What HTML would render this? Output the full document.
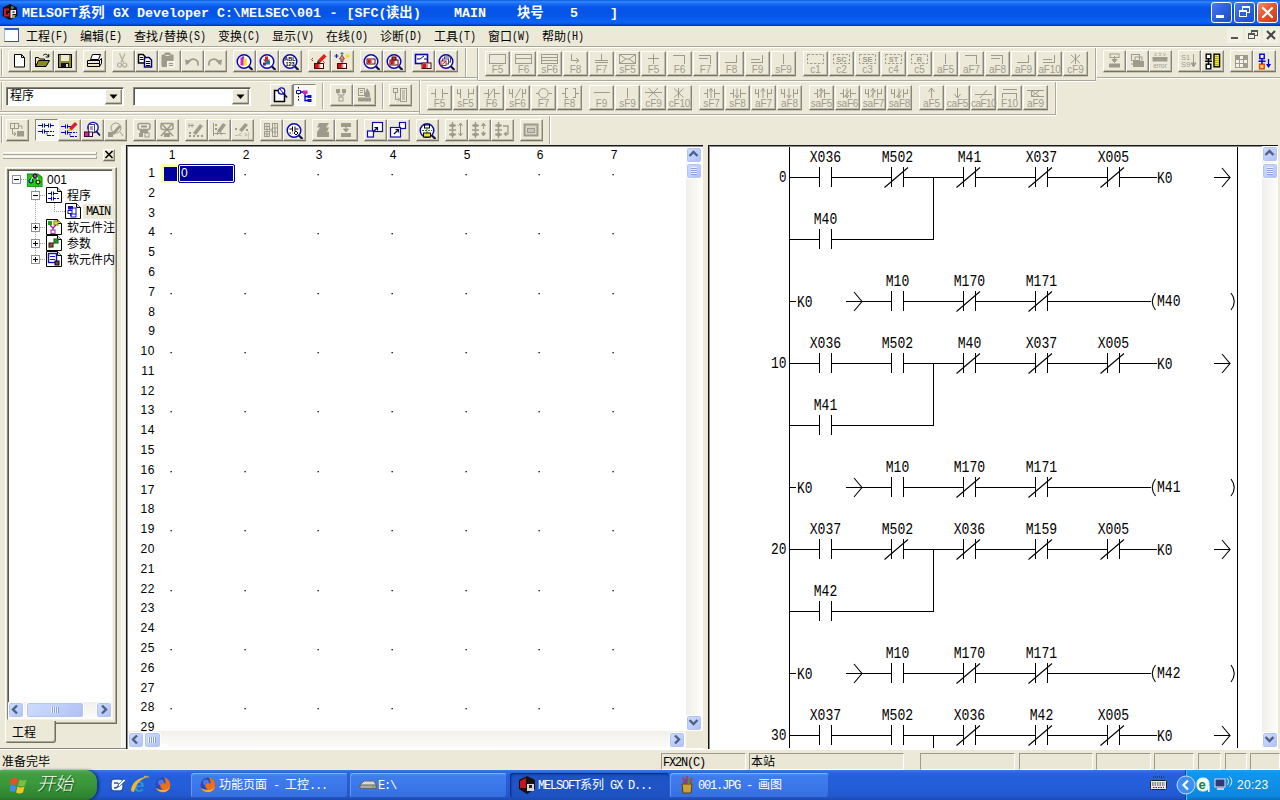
<!DOCTYPE html>
<html lang="zh-CN"><head><meta charset="utf-8"><title>MELSOFT系列 GX Developer</title>
<style>
html,body{margin:0;padding:0;}
body{width:1280px;height:800px;overflow:hidden;position:relative;background:#ECE9D8;font-family:"Liberation Sans","Noto Sans CJK SC",sans-serif;font-size:12px;color:#000;}
div{position:absolute;box-sizing:border-box;}
.t{white-space:pre;line-height:1;}
.mono{font-family:"Liberation Mono","Noto Sans CJK SC",monospace;}
.btn{background:#ECE9D8;border-top:1px solid #fff;border-left:1px solid #fff;border-right:1px solid #8a877a;border-bottom:1px solid #747166;box-shadow:inset -1px -1px 0 #bebbab, 0 1px 0 #cac7b7;}
.btnp{background:#F8F7F1;border-top:1px solid #8a877a;border-left:1px solid #8a877a;border-right:1px solid #fff;border-bottom:1px solid #fff;}
.lbl{font-family:"Liberation Sans",sans-serif;color:#9E9B8D;font-size:10px;line-height:1;white-space:pre;text-align:center;}
.sbtn{background:linear-gradient(135deg,#cfdcfd 0%,#bccdfa 60%,#aebff3 100%);border:1px solid #fff;border-radius:3px;box-shadow:inset 0 0 0 1px #b4c4f0;}
.track{background:linear-gradient(to right,#f1efe8,#fdfdfb);}
.trackh{background:linear-gradient(to bottom,#f1efe8,#fdfdfb);}
.sp{background:#EAE7D6;border:1px solid;border-color:#9d9a8c #fff #fff #9d9a8c;}
.l6{font-family:"Liberation Mono",monospace;letter-spacing:-1.2px;}
.tb{color:#fff;font-size:12px;white-space:pre;line-height:1;}
</style></head>
<body>
<div style="left:0px;top:0px;width:1280px;height:26px;background:linear-gradient(to bottom,#0A58E0 0%,#3088FC 7%,#1A6CF4 15%,#0858EA 26%,#0453E6 45%,#0658EA 65%,#0A64F6 82%,#085CEE 90%,#0046C8 95%,#0030A0 100%);"></div>
<svg style="position:absolute;left:2px;top:4px;" width="16" height="16" viewBox="0 0 16 16"><polygon points="8,0 15,3.5 15.5,12 8,16 0.5,12 1,3.5" fill="#181010"/><path d="M2 4.500h5v2h-3v4h2v-1.500h1.500v3.500h-5.500z" fill="#D01818"/><path d="M8.500 6h5.500v4h-3.500v4h-2z" fill="#e8e8e8"/><rect x="10.500" y="7.300" width="2" height="1.500" fill="#403030"/><path d="M9 2l3 1l-1 2.500l-2-1z" fill="#5a8a4a"/><path d="M10.500 11h3l-1 3h-2z" fill="#b0a040"/></svg>
<div class="t mono" style="left:22px;top:7px;color:#fff;font-weight:bold;font-size:13.33px;">MELSOFT</div>
<div class="t mono" style="left:78px;top:7px;color:#fff;font-weight:bold;font-size:13.33px;">系列</div>
<div class="t mono" style="left:113px;top:7px;color:#fff;font-weight:bold;font-size:13.33px;">GX Developer</div>
<div class="t mono" style="left:217px;top:7px;color:#fff;font-weight:bold;font-size:13.33px;">C:\MELSEC\001</div>
<div class="t mono" style="left:329.5px;top:7px;color:#fff;font-weight:bold;font-size:13.33px;">-</div>
<div class="t mono" style="left:346.5px;top:7px;color:#fff;font-weight:bold;font-size:13.33px;">[SFC(</div>
<div class="t mono" style="left:386px;top:7px;color:#fff;font-weight:bold;font-size:13.33px;">读出</div>
<div class="t mono" style="left:413px;top:7px;color:#fff;font-weight:bold;font-size:13.33px;">)</div>
<div class="t mono" style="left:454px;top:7px;color:#fff;font-weight:bold;font-size:13.33px;">MAIN</div>
<div class="t mono" style="left:517px;top:7px;color:#fff;font-weight:bold;font-size:13.33px;">块号</div>
<div class="t mono" style="left:570px;top:7px;color:#fff;font-weight:bold;font-size:13.33px;">5</div>
<div class="t mono" style="left:610px;top:7px;color:#fff;font-weight:bold;font-size:13.33px;">]</div>
<div style="left:1211px;top:2px;width:21px;height:21px;background:linear-gradient(135deg,#4A7CF0 0%,#2E62E0 45%,#1D4CC8 100%);border:1px solid #fff;border-radius:3px;"><div style="left:4px;top:12px;width:8px;height:3px;background:#fff;"></div></div>
<div style="left:1234px;top:2px;width:21px;height:21px;background:linear-gradient(135deg,#4A7CF0 0%,#2E62E0 45%,#1D4CC8 100%);border:1px solid #fff;border-radius:3px;"><div style="left:7px;top:3px;width:8px;height:7px;border:1px solid #fff;border-top:2px solid #fff;"></div><div style="left:4px;top:7px;width:8px;height:7px;border:1px solid #fff;border-top:2px solid #fff;background:#2C5FDD;"></div></div>
<div style="left:1257px;top:2px;width:21px;height:21px;background:linear-gradient(135deg,#F09070 0%,#E4582E 45%,#C83A14 100%);border:1px solid #fff;border-radius:3px;"><svg style="position:absolute;left:3px;top:3px;" width="13" height="13" viewBox="0 0 13 13"><path d="M2 2L11 11M11 2L2 11" stroke="#fff" stroke-width="2.2" stroke-linecap="round"/></svg></div>
<div style="left:4px;top:28px;width:15px;height:14px;background:#fff;border:1px solid;border-color:#2a60d0 #405080 #405080 #9ab8f0;border-top:2px solid #2a60d0;"></div>
<div class="t" style="left:26px;top:31px;font-size:12px;">工程</div>
<div class="t mono" style="left:50px;top:30px;font-size:13px;transform:scaleX(0.77);transform-origin:0 0;">(F)</div>
<div class="t" style="left:80px;top:31px;font-size:12px;">编辑</div>
<div class="t mono" style="left:104px;top:30px;font-size:13px;transform:scaleX(0.77);transform-origin:0 0;">(E)</div>
<div class="t" style="left:134px;top:31px;font-size:12px;">查找</div>
<div class="t" style="left:158px;top:31px;font-size:12px;width:6px;text-align:center;">/</div>
<div class="t" style="left:164px;top:31px;font-size:12px;">替换</div>
<div class="t mono" style="left:188px;top:30px;font-size:13px;transform:scaleX(0.77);transform-origin:0 0;">(S)</div>
<div class="t" style="left:218px;top:31px;font-size:12px;">变换</div>
<div class="t mono" style="left:242px;top:30px;font-size:13px;transform:scaleX(0.77);transform-origin:0 0;">(C)</div>
<div class="t" style="left:272px;top:31px;font-size:12px;">显示</div>
<div class="t mono" style="left:296px;top:30px;font-size:13px;transform:scaleX(0.77);transform-origin:0 0;">(V)</div>
<div class="t" style="left:326px;top:31px;font-size:12px;">在线</div>
<div class="t mono" style="left:350px;top:30px;font-size:13px;transform:scaleX(0.77);transform-origin:0 0;">(O)</div>
<div class="t" style="left:380px;top:31px;font-size:12px;">诊断</div>
<div class="t mono" style="left:404px;top:30px;font-size:13px;transform:scaleX(0.77);transform-origin:0 0;">(D)</div>
<div class="t" style="left:434px;top:31px;font-size:12px;">工具</div>
<div class="t mono" style="left:458px;top:30px;font-size:13px;transform:scaleX(0.77);transform-origin:0 0;">(T)</div>
<div class="t" style="left:488px;top:31px;font-size:12px;">窗口</div>
<div class="t mono" style="left:512px;top:30px;font-size:13px;transform:scaleX(0.77);transform-origin:0 0;">(W)</div>
<div class="t" style="left:542px;top:31px;font-size:12px;">帮助</div>
<div class="t mono" style="left:566px;top:30px;font-size:13px;transform:scaleX(0.77);transform-origin:0 0;">(H)</div>
<div style="left:1227px;top:28px;width:16px;height:15px;background:#F2F0E4;"><div style="left:4px;top:9px;width:7px;height:2px;background:#555;"></div></div>
<div style="left:1245px;top:28px;width:16px;height:15px;background:#F2F0E4;"><div style="left:6px;top:2px;width:7px;height:6px;border:1px solid #555;border-top:2px solid #555;"></div><div style="left:3px;top:5px;width:7px;height:6px;border:1px solid #555;border-top:2px solid #555;background:#F2F0E4;"></div></div>
<div style="left:1263px;top:28px;width:16px;height:15px;background:#F2F0E4;"></div>
<svg style="position:absolute;left:1263px;top:28px;" width="16" height="15" viewBox="0 0 16 15"><path d="M4 3L12 11M12 3L4 11" stroke="#444" stroke-width="2"/></svg>
<div style="left:0px;top:46px;width:1280px;height:1px;background:#ACA899;"></div>
<div style="left:0px;top:47px;width:1280px;height:1px;background:#fff;"></div>
<div style="left:0px;top:77px;width:478px;height:1px;background:#ACA899;"></div>
<div style="left:0px;top:78px;width:478px;height:1px;background:#fff;"></div>
<div style="left:0px;top:80px;width:478px;height:1px;background:#C9C6B6;"></div>
<div style="left:0px;top:81px;width:478px;height:1px;background:#F8F7F0;"></div>
<div style="left:478px;top:80px;width:618px;height:1px;background:#ACA899;"></div>
<div style="left:478px;top:81px;width:618px;height:1px;background:#fff;"></div>
<div style="left:1096px;top:77px;width:184px;height:1px;background:#ACA899;"></div>
<div style="left:1096px;top:78px;width:184px;height:1px;background:#fff;"></div>
<div style="left:0px;top:111px;width:420px;height:1px;background:#ACA899;"></div>
<div style="left:0px;top:112px;width:420px;height:1px;background:#fff;"></div>
<div style="left:0px;top:114px;width:420px;height:1px;background:#C9C6B6;"></div>
<div style="left:0px;top:115px;width:420px;height:1px;background:#F8F7F0;"></div>
<div style="left:420px;top:114px;width:636px;height:1px;background:#ACA899;"></div>
<div style="left:420px;top:115px;width:636px;height:1px;background:#fff;"></div>
<div style="left:477px;top:48px;width:1px;height:32px;background:#ACA899;"></div><div style="left:478px;top:48px;width:1px;height:32px;background:#fff;"></div>
<div style="left:1095px;top:48px;width:1px;height:32px;background:#ACA899;"></div><div style="left:1096px;top:48px;width:1px;height:32px;background:#fff;"></div>
<div style="left:465px;top:48px;width:1px;height:29px;background:#ACA899;"></div><div style="left:466px;top:48px;width:1px;height:29px;background:#fff;"></div>
<div style="left:419px;top:80px;width:1px;height:34px;background:#ACA899;"></div><div style="left:420px;top:80px;width:1px;height:34px;background:#fff;"></div>
<div style="left:1055px;top:82px;width:1px;height:32px;background:#ACA899;"></div><div style="left:1056px;top:82px;width:1px;height:32px;background:#fff;"></div>
<div style="left:549px;top:116px;width:1px;height:28px;background:#ACA899;"></div><div style="left:550px;top:116px;width:1px;height:28px;background:#fff;"></div>
<div style="left:1px;top:49px;width:1px;height:27px;background:#ACA899;"></div><div style="left:2px;top:49px;width:1px;height:27px;background:#fff;"></div>
<div style="left:1px;top:82px;width:1px;height:28px;background:#ACA899;"></div><div style="left:2px;top:82px;width:1px;height:28px;background:#fff;"></div>
<div style="left:1px;top:116px;width:1px;height:27px;background:#ACA899;"></div><div style="left:2px;top:116px;width:1px;height:27px;background:#fff;"></div>
<div class="btn" style="left:8px;top:50px;width:23px;height:22px;"><svg style="position:absolute;left:1px;top:1px;" width="18" height="18" viewBox="0 0 18 18"><path d="M4.5 2.5h7l3 3v9.5h-10z" fill="#fff" stroke="#000"/><path d="M11.5 2.5v3h3" fill="none" stroke="#000"/></svg></div>
<div class="btn" style="left:31px;top:50px;width:23px;height:22px;"><svg style="position:absolute;left:1px;top:1px;" width="18" height="18" viewBox="0 0 18 18"><path d="M2.5 14.5v-9h3l1 1.5h5v2" fill="#F0F090" stroke="#000"/><path d="M2.5 14.5l3-6h11l-3.5 6z" fill="#8B8B20" stroke="#000"/><path d="M10 3.5c2-2 4.5-1.5 5.5 1M15.8 2v3h-3" fill="none" stroke="#000"/></svg></div>
<div class="btn" style="left:54px;top:50px;width:23px;height:22px;"><svg style="position:absolute;left:1px;top:1px;" width="18" height="18" viewBox="0 0 18 18"><rect x="2.5" y="2.5" width="13" height="13" fill="#8B8B30" stroke="#000"/><rect x="5" y="3" width="8" height="6" fill="#ECE9D8"/><rect x="5" y="11" width="8" height="4.5" fill="#111"/><rect x="10" y="12" width="2" height="3" fill="#ddd"/></svg></div>
<div class="btn" style="left:83px;top:50px;width:23px;height:22px;"><svg style="position:absolute;left:1px;top:1px;" width="18" height="18" viewBox="0 0 18 18"><path d="M5.5 7.5l2-5h8l-2 5z" fill="#fff" stroke="#000"/><path d="M2.5 8.5h12l2-2v5l-2 3h-12z" fill="#e8e8e8" stroke="#000"/><path d="M2.5 11.5h12M14.5 8.5v6" stroke="#000" fill="none"/><rect x="5" y="12.5" width="7" height="1.5" fill="#F0F090"/></svg></div>
<div class="btn" style="left:112px;top:50px;width:23px;height:22px;"><svg style="position:absolute;left:1px;top:1px;" width="18" height="18" viewBox="0 0 18 18"><path d="M5.500 1.500l4 9M11 1.500l-4 9" stroke="#B0AD9E" fill="none" stroke-width="1.2"/><circle cx="5.5" cy="13" r="2" fill="none" stroke="#B0AD9E" stroke-width="1.2"/><circle cx="10.8" cy="13" r="2" fill="none" stroke="#B0AD9E" stroke-width="1.2"/></svg></div>
<div class="btn" style="left:135px;top:50px;width:23px;height:22px;"><svg style="position:absolute;left:1px;top:1px;" width="18" height="18" viewBox="0 0 18 18"><path d="M1.500 2.500h4.500l2 2v6.500h-6.500z" fill="#fff" stroke="#000" stroke-width="1.5"/><path d="M3 5.500h3M3 7.500h3.500" stroke="#000" fill="none"/><path d="M7.500 5.500h4.500l2.500 2.500v7h-7z" fill="#fff" stroke="#000068" stroke-width="1.5"/><path d="M9 9.500h4M9 11.500h4M9 13.500h4" stroke="#000" fill="none"/></svg></div>
<div class="btn" style="left:158px;top:50px;width:23px;height:22px;"><svg style="position:absolute;left:1px;top:1px;" width="18" height="18" viewBox="0 0 18 18"><rect x="1.500" y="2.500" width="12" height="12.500" rx="1" fill="#9E9B8D"/><rect x="4.500" y="0.500" width="6" height="3.500" rx="1" fill="#9E9B8D"/><rect x="5.500" y="3" width="4" height="1" fill="#ECE9D8"/><rect x="7.500" y="9.500" width="7" height="5.500" fill="#ECE9D8" stroke="#f8f8f0"/><path d="M9 11.500h4M9 13.500h4" stroke="#9E9B8D" fill="none"/></svg></div>
<div class="btn" style="left:181px;top:50px;width:23px;height:22px;"><svg style="position:absolute;left:1px;top:1px;" width="18" height="18" viewBox="0 0 18 18"><path d="M4.500 12C5 8.500 9 6.500 12 7.500C14.500 8.500 15.500 10.500 15 13.500" stroke="#9E9B8D" fill="none" stroke-width="1.7"/><path d="M2 7.500l6 1.500l-5 4.500z" fill="#9E9B8D"/></svg></div>
<div class="btn" style="left:204px;top:50px;width:23px;height:22px;"><svg style="position:absolute;left:1px;top:1px;" width="18" height="18" viewBox="0 0 18 18"><path d="M13.500 12C13 8.500 9 6.500 6 7.500C3.500 8.500 2.500 10.500 3 13.500" stroke="#9E9B8D" fill="none" stroke-width="1.7"/><path d="M16 7.500l-6 1.500l5 4.500z" fill="#9E9B8D"/></svg></div>
<div class="btn" style="left:233px;top:50px;width:23px;height:22px;"><svg style="position:absolute;left:1px;top:1px;" width="18" height="18" viewBox="0 0 18 18"><circle cx="9" cy="9.5" r="6.8" fill="#fff" stroke="#0A0AB0" stroke-width="1.5"/><g transform="translate(1 1.5)"><rect x="4.5" y="4" width="3.2" height="8" fill="#D020D0" stroke="none" stroke-width="1" /><rect x="7.7" y="5" width="3" height="7" fill="#F0E020" stroke="none" stroke-width="1" /><rect x="6" y="3" width="2" height="2" fill="#8020C0" stroke="none" stroke-width="1" /></g><path d="M14 14.5L17.5 18.0" stroke="#101040" stroke-width="2.2"/></svg></div>
<div class="btn" style="left:256px;top:50px;width:23px;height:22px;"><svg style="position:absolute;left:1px;top:1px;" width="18" height="18" viewBox="0 0 18 18"><circle cx="9" cy="9.5" r="6.8" fill="#fff" stroke="#0A0AB0" stroke-width="1.5"/><g transform="translate(1 1.5)"><path d="M6 3l3 0l0 3l2 0l-3.5 4l-3.5-4l2 0z" fill="#D02020"/><rect x="7" y="7" width="4" height="4" fill="#208080"/><rect x="4" y="9" width="3" height="3" fill="#6020A0"/></g><path d="M14 14.5L17.5 18.0" stroke="#101040" stroke-width="2.2"/></svg></div>
<div class="btn" style="left:279px;top:50px;width:23px;height:22px;"><svg style="position:absolute;left:1px;top:1px;" width="18" height="18" viewBox="0 0 18 18"><circle cx="9" cy="9.5" r="6.8" fill="#fff" stroke="#0A0AB0" stroke-width="1.5"/><g transform="translate(1 1.5)"><text x="8" y="7.6" font-family="Liberation Sans,sans-serif" font-size="5.5" fill="#000" text-anchor="middle" font-weight="bold">ABL</text><text x="8" y="12.6" font-family="Liberation Sans,sans-serif" font-size="5.5" fill="#000" text-anchor="middle" font-weight="bold">123</text></g><path d="M14 14.5L17.5 18.0" stroke="#101040" stroke-width="2.2"/></svg></div>
<div class="btn" style="left:308px;top:50px;width:23px;height:22px;"><svg style="position:absolute;left:1px;top:1px;" width="18" height="18" viewBox="0 0 18 18"><path d="M8 8l6-6l2.5 2.5l-6 6z" fill="#E02020"/><path d="M8 8l-1.5 4l4-1.5z" fill="#222"/><path d="M3 6l-1.5 1.5l1.5 1.5M13 9l1.5 1.5l-1.5 1.5" stroke="#C04000" fill="none"/><rect x="4.5" y="11.5" width="9" height="5" fill="#fff" stroke="#500" stroke-width="1" /><rect x="5.0" y="12.0" width="4.05" height="4" fill="#C81818" stroke="none" stroke-width="1" /><rect x="8.55" y="12.0" width="1.8" height="4" fill="#E08080" stroke="none" stroke-width="1" /></svg></div>
<div class="btn" style="left:331px;top:50px;width:23px;height:22px;"><svg style="position:absolute;left:1px;top:1px;" width="18" height="18" viewBox="0 0 18 18"><path d="M9 3l2.5 4h-1.5v3h-2v-3h-1.5z" fill="#E0A020" stroke="#802080" stroke-width="0.8"/><path d="M3.5 2v4M1.5 4h4" stroke="#2020C0" stroke-width="1.2"/><path d="M9 0v3M7.5 1.5h3" stroke="#208080"/><circle cx="14.5" cy="4" r="2" fill="#F0E020" stroke="none" stroke-width="1"/><rect x="4.5" y="11.5" width="9" height="5" fill="#fff" stroke="#500" stroke-width="1" /><rect x="5.0" y="12.0" width="4.05" height="4" fill="#C81818" stroke="none" stroke-width="1" /><rect x="8.55" y="12.0" width="1.8" height="4" fill="#E08080" stroke="none" stroke-width="1" /></svg></div>
<div class="btn" style="left:360px;top:50px;width:23px;height:22px;"><svg style="position:absolute;left:1px;top:1px;" width="18" height="18" viewBox="0 0 18 18"><circle cx="9" cy="9.5" r="6.8" fill="#fff" stroke="#0A0AB0" stroke-width="1.5"/><g transform="translate(1 1.5)"><rect x="4" y="5.5" width="8" height="5" fill="#fff" stroke="#500" stroke-width="1" /><rect x="4.5" y="6.0" width="3.6" height="4" fill="#C81818" stroke="none" stroke-width="1" /><rect x="7.6" y="6.0" width="1.6" height="4" fill="#E08080" stroke="none" stroke-width="1" /></g><path d="M14 14.5L17.5 18.0" stroke="#101040" stroke-width="2.2"/></svg></div>
<div class="btn" style="left:383px;top:50px;width:23px;height:22px;"><svg style="position:absolute;left:1px;top:1px;" width="18" height="18" viewBox="0 0 18 18"><circle cx="9" cy="9.5" r="6.8" fill="#fff" stroke="#0A0AB0" stroke-width="1.5"/><g transform="translate(1 1.5)"><rect x="4" y="6.5" width="8" height="5" fill="#fff" stroke="#500" stroke-width="1" /><rect x="4.5" y="7.0" width="3.6" height="4" fill="#C81818" stroke="none" stroke-width="1" /><rect x="7.6" y="7.0" width="1.6" height="4" fill="#E08080" stroke="none" stroke-width="1" /><rect x="6" y="3.5" width="4" height="3" fill="#C04040" stroke="#500" stroke-width="1" /></g><path d="M14 14.5L17.5 18.0" stroke="#101040" stroke-width="2.2"/></svg></div>
<div class="btn" style="left:412px;top:50px;width:23px;height:22px;"><svg style="position:absolute;left:1px;top:1px;" width="18" height="18" viewBox="0 0 18 18"><rect x="1.5" y="2.5" width="12" height="9" fill="#fff" stroke="#0A0AB0" stroke-width="1.6" /><path d="M3 7h3l4-3M10 7h3" stroke="#000060" fill="none"/><rect x="8" y="11" width="9" height="5.5" fill="#fff" stroke="#500" stroke-width="1" /><rect x="8.5" y="11.5" width="4.05" height="4.5" fill="#C81818" stroke="none" stroke-width="1" /><rect x="12.05" y="11.5" width="1.8" height="4.5" fill="#E08080" stroke="none" stroke-width="1" /></svg></div>
<div class="btn" style="left:435px;top:50px;width:23px;height:22px;"><svg style="position:absolute;left:1px;top:1px;" width="18" height="18" viewBox="0 0 18 18"><circle cx="9" cy="9.5" r="6.8" fill="#fff" stroke="#0A0AB0" stroke-width="1.5"/><g transform="translate(1 1.5)"><rect x="6.5" y="3.5" width="6" height="5" fill="#fff" stroke="#404080" stroke-width="1" /><rect x="4.5" y="5.5" width="6" height="5" fill="#fff" stroke="#404080" stroke-width="1" /><rect x="3" y="7.5" width="5" height="4.5" fill="#fff" stroke="#C81818" stroke-width="1" /><path d="M3.5 11.5l4-3.5" stroke="#C81818"/></g><path d="M14 14.5L17.5 18.0" stroke="#101040" stroke-width="2.2"/></svg></div>
<div class="btn" style="left:1103px;top:50px;width:23px;height:22px;"><svg style="position:absolute;left:1px;top:1px;" width="18" height="18" viewBox="0 0 18 18"><rect x="5" y="2" width="9" height="3.5" fill="none" stroke="#9E9B8D"/><path d="M9.5 4v5M7 7.5l2.5 3l2.5-3z" fill="#9E9B8D" stroke="#9E9B8D"/><rect x="4" y="11.5" width="11" height="4" fill="#9E9B8D"/></svg></div>
<div class="btn" style="left:1126px;top:50px;width:23px;height:22px;"><svg style="position:absolute;left:1px;top:1px;" width="18" height="18" viewBox="0 0 18 18"><rect x="3.5" y="2.5" width="8" height="6" fill="none" stroke="#9E9B8D"/><rect x="7" y="5" width="7" height="5" fill="none" stroke="#9E9B8D"/><rect x="5" y="9" width="11" height="6" fill="#9E9B8D"/><path d="M3 12h3" stroke="#9E9B8D"/></svg></div>
<div class="btn" style="left:1149px;top:50px;width:23px;height:22px;"><svg style="position:absolute;left:1px;top:1px;" width="18" height="18" viewBox="0 0 18 18"><rect x="1.5" y="5" width="15" height="4.5" fill="#9E9B8D"/><text x="9" y="4" font-family="Liberation Sans,sans-serif" font-size="5.5" fill="#9E9B8D" text-anchor="middle">c ± v</text><text x="9" y="15.5" font-family="Liberation Sans,sans-serif" font-size="6.5" fill="#9E9B8D" text-anchor="middle">error</text></svg></div>
<div class="btn" style="left:1178px;top:50px;width:23px;height:22px;"><svg style="position:absolute;left:1px;top:1px;" width="18" height="18" viewBox="0 0 18 18"><text x="1" y="7.5" font-family="Liberation Sans,sans-serif" font-size="7.5" fill="#9E9B8D" >S1</text><text x="1" y="15" font-family="Liberation Sans,sans-serif" font-size="7.5" fill="#9E9B8D" >S9</text><path d="M13.5 2v12M11 11l2.5 4l2.5-4z" stroke="#9E9B8D" fill="#9E9B8D"/></svg></div>
<div class="btn" style="left:1201px;top:50px;width:23px;height:22px;"><svg style="position:absolute;left:1px;top:1px;" width="18" height="18" viewBox="0 0 18 18"><rect x="3.2" y="2.2" width="4.6" height="4.6" fill="#fff" stroke="#000" stroke-width="1.4" /><rect x="3.2" y="12.2" width="4.6" height="4.6" fill="#fff" stroke="#000" stroke-width="1.4" /><path d="M5.5 6.800v5.400M2 9.300h7" stroke="#000" stroke-width="1.4"/><rect x="11" y="2.2" width="5.6" height="12.6" fill="#F4EC30" stroke="#000" stroke-width="1.4" /><path d="M12 4.500h3.600M12 6.500h3.600M12 8.500h3.600M12 10.500h3.600M12 12.500h3.600" stroke="#B0A800"/></svg></div>
<div class="btn" style="left:1230px;top:50px;width:23px;height:22px;"><svg style="position:absolute;left:1px;top:1px;" width="18" height="18" viewBox="0 0 18 18"><rect x="3" y="3" width="13" height="13" fill="#9E9B8D"/><rect x="8" y="4" width="3" height="3" fill="#f4f2ea" stroke="none" stroke-width="1" /><rect x="4" y="8" width="3" height="3" fill="#f4f2ea" stroke="none" stroke-width="1" /><rect x="8" y="8" width="3" height="3" fill="#f4f2ea" stroke="none" stroke-width="1" /><rect x="12" y="8" width="3" height="3" fill="#f4f2ea" stroke="none" stroke-width="1" /><rect x="4" y="12" width="3" height="3" fill="#f4f2ea" stroke="none" stroke-width="1" /><rect x="8" y="12" width="3" height="3" fill="#f4f2ea" stroke="none" stroke-width="1" /></svg></div>
<div class="btn" style="left:1253px;top:50px;width:23px;height:22px;"><svg style="position:absolute;left:1px;top:1px;" width="18" height="18" viewBox="0 0 18 18"><rect x="4.8" y="2.2" width="4.4" height="4.4" fill="#fff" stroke="#0000D0" stroke-width="1.4" /><rect x="4.6" y="12.2" width="4.6" height="4.6" fill="#F8D070" stroke="#E05000" stroke-width="1.5" /><path d="M7 6.800v5.200M3.500 9.300h7" stroke="#0000D0" stroke-width="1.4"/><path d="M13.500 7v8" stroke="#0000D0" stroke-width="1.3"/><path d="M11 12l2.500 4l2.500-4z" fill="#0000D0"/></svg></div>
<div class="btn" style="left:485px;top:51px;width:25px;height:25px;"><svg style="position:absolute;left:-1px;top:-1px;" width="25" height="25" viewBox="0 0 25 25"><path d="M4.5 3.5h16v9h-16z" stroke="#9E9B8D" stroke-width="1" fill="none" shape-rendering="crispEdges"/></svg><div class="lbl" style="left:-3px;top:13px;width:29px;">F5</div></div>
<div class="btn" style="left:511px;top:51px;width:25px;height:25px;"><svg style="position:absolute;left:-1px;top:-1px;" width="25" height="25" viewBox="0 0 25 25"><path d="M4.5 3.5h16v9h-16zM4.5 7.5h16" stroke="#9E9B8D" stroke-width="1" fill="none" shape-rendering="crispEdges"/></svg><div class="lbl" style="left:-3px;top:13px;width:29px;">F6</div></div>
<div class="btn" style="left:537px;top:51px;width:25px;height:25px;"><svg style="position:absolute;left:-1px;top:-1px;" width="25" height="25" viewBox="0 0 25 25"><path d="M4.5 3.5h16v9h-16zM4.5 6.5h16M4.5 9.5h16" stroke="#9E9B8D" stroke-width="1" fill="none" shape-rendering="crispEdges"/></svg><div class="lbl" style="left:-3px;top:13px;width:29px;">sF6</div></div>
<div class="btn" style="left:563px;top:51px;width:25px;height:25px;"><svg style="position:absolute;left:-1px;top:-1px;" width="25" height="25" viewBox="0 0 25 25"><path d="M8.5 3v6.5h7" stroke="#9E9B8D" stroke-width="1" fill="none" shape-rendering="crispEdges"/><path d="M13 7l3 2.500l-3 2.500" stroke="#9E9B8D" fill="none"/></svg><div class="lbl" style="left:-3px;top:13px;width:29px;">F8</div></div>
<div class="btn" style="left:589px;top:51px;width:25px;height:25px;"><svg style="position:absolute;left:-1px;top:-1px;" width="25" height="25" viewBox="0 0 25 25"><path d="M12.5 3v6M6 9.5h13M6 11.5h13" stroke="#9E9B8D" stroke-width="1" fill="none" shape-rendering="crispEdges"/></svg><div class="lbl" style="left:-3px;top:13px;width:29px;">F7</div></div>
<div class="btn" style="left:615px;top:51px;width:25px;height:25px;"><svg style="position:absolute;left:-1px;top:-1px;" width="25" height="25" viewBox="0 0 25 25"><path d="M4.5 3.5h16v9h-16z" stroke="#9E9B8D" stroke-width="1" fill="none" shape-rendering="crispEdges"/><path d="M5 4l6 4l-6 4M20 4l-6 4l6 4M11 8h3" stroke="#9E9B8D" fill="none"/></svg><div class="lbl" style="left:-3px;top:13px;width:29px;">sF5</div></div>
<div class="btn" style="left:641px;top:51px;width:25px;height:25px;"><svg style="position:absolute;left:-1px;top:-1px;" width="25" height="25" viewBox="0 0 25 25"><path d="M12.5 3v10M7 7.5h11" stroke="#9E9B8D" stroke-width="1" fill="none" shape-rendering="crispEdges"/></svg><div class="lbl" style="left:-3px;top:13px;width:29px;">F5</div></div>
<div class="btn" style="left:667px;top:51px;width:25px;height:25px;"><svg style="position:absolute;left:-1px;top:-1px;" width="25" height="25" viewBox="0 0 25 25"><path d="M6 4.5h11v8" stroke="#9E9B8D" stroke-width="1" fill="none" shape-rendering="crispEdges"/></svg><div class="lbl" style="left:-3px;top:13px;width:29px;">F6</div></div>
<div class="btn" style="left:693px;top:51px;width:25px;height:25px;"><svg style="position:absolute;left:-1px;top:-1px;" width="25" height="25" viewBox="0 0 25 25"><path d="M6 4.5h11v8M6 7.5h9" stroke="#9E9B8D" stroke-width="1" fill="none" shape-rendering="crispEdges"/></svg><div class="lbl" style="left:-3px;top:13px;width:29px;">F7</div></div>
<div class="btn" style="left:719px;top:51px;width:25px;height:25px;"><svg style="position:absolute;left:-1px;top:-1px;" width="25" height="25" viewBox="0 0 25 25"><path d="M6 11.5h11v-8" stroke="#9E9B8D" stroke-width="1" fill="none" shape-rendering="crispEdges"/></svg><div class="lbl" style="left:-3px;top:13px;width:29px;">F8</div></div>
<div class="btn" style="left:745px;top:51px;width:25px;height:25px;"><svg style="position:absolute;left:-1px;top:-1px;" width="25" height="25" viewBox="0 0 25 25"><path d="M6 11.5h11v-8M6 8.5h9" stroke="#9E9B8D" stroke-width="1" fill="none" shape-rendering="crispEdges"/></svg><div class="lbl" style="left:-3px;top:13px;width:29px;">F9</div></div>
<div class="btn" style="left:771px;top:51px;width:25px;height:25px;"><svg style="position:absolute;left:-1px;top:-1px;" width="25" height="25" viewBox="0 0 25 25"><path d="M12.5 3v10" stroke="#9E9B8D" stroke-width="1" fill="none" shape-rendering="crispEdges"/></svg><div class="lbl" style="left:-3px;top:13px;width:29px;">sF9</div></div>
<div class="btn" style="left:803px;top:51px;width:25px;height:25px;"><svg style="position:absolute;left:-1px;top:-1px;" width="25" height="25" viewBox="0 0 25 25"><rect x="4.5" y="3.5" width="16" height="9" fill="none" stroke="#9E9B8D" stroke-dasharray="2.5 1.5"/></svg><div class="lbl" style="left:-3px;top:13px;width:29px;">c1</div></div>
<div class="btn" style="left:829px;top:51px;width:25px;height:25px;"><svg style="position:absolute;left:-1px;top:-1px;" width="25" height="25" viewBox="0 0 25 25"><rect x="4.5" y="3.5" width="16" height="9" fill="none" stroke="#9E9B8D" stroke-dasharray="2.5 1.5"/><text x="12.5" y="10.8" font-family="Liberation Sans,sans-serif" font-size="7.5" fill="#9E9B8D" text-anchor="middle" font-weight="bold">SC</text></svg><div class="lbl" style="left:-3px;top:13px;width:29px;">c2</div></div>
<div class="btn" style="left:855px;top:51px;width:25px;height:25px;"><svg style="position:absolute;left:-1px;top:-1px;" width="25" height="25" viewBox="0 0 25 25"><rect x="4.5" y="3.5" width="16" height="9" fill="none" stroke="#9E9B8D" stroke-dasharray="2.5 1.5"/><text x="12.5" y="10.8" font-family="Liberation Sans,sans-serif" font-size="7.5" fill="#9E9B8D" text-anchor="middle" font-weight="bold">SE</text></svg><div class="lbl" style="left:-3px;top:13px;width:29px;">c3</div></div>
<div class="btn" style="left:881px;top:51px;width:25px;height:25px;"><svg style="position:absolute;left:-1px;top:-1px;" width="25" height="25" viewBox="0 0 25 25"><rect x="4.5" y="3.5" width="16" height="9" fill="none" stroke="#9E9B8D" stroke-dasharray="2.5 1.5"/><text x="12.5" y="10.8" font-family="Liberation Sans,sans-serif" font-size="7.5" fill="#9E9B8D" text-anchor="middle" font-weight="bold">ST</text></svg><div class="lbl" style="left:-3px;top:13px;width:29px;">c4</div></div>
<div class="btn" style="left:907px;top:51px;width:25px;height:25px;"><svg style="position:absolute;left:-1px;top:-1px;" width="25" height="25" viewBox="0 0 25 25"><rect x="4.5" y="3.5" width="16" height="9" fill="none" stroke="#9E9B8D" stroke-dasharray="2.5 1.5"/><text x="12.5" y="10.8" font-family="Liberation Sans,sans-serif" font-size="7.5" fill="#9E9B8D" text-anchor="middle" font-weight="bold">R</text></svg><div class="lbl" style="left:-3px;top:13px;width:29px;">c5</div></div>
<div class="btn" style="left:933px;top:51px;width:25px;height:25px;"><svg style="position:absolute;left:-1px;top:-1px;" width="25" height="25" viewBox="0 0 25 25"><path d="M12.5 3v10" stroke="#9E9B8D" stroke-width="1" fill="none" shape-rendering="crispEdges"/></svg><div class="lbl" style="left:-3px;top:13px;width:29px;">aF5</div></div>
<div class="btn" style="left:959px;top:51px;width:25px;height:25px;"><svg style="position:absolute;left:-1px;top:-1px;" width="25" height="25" viewBox="0 0 25 25"><path d="M6 4.5h11v8" stroke="#9E9B8D" stroke-width="1" fill="none" shape-rendering="crispEdges"/></svg><div class="lbl" style="left:-3px;top:13px;width:29px;">aF7</div></div>
<div class="btn" style="left:985px;top:51px;width:25px;height:25px;"><svg style="position:absolute;left:-1px;top:-1px;" width="25" height="25" viewBox="0 0 25 25"><path d="M6 4.5h11v8M6 7.5h9" stroke="#9E9B8D" stroke-width="1" fill="none" shape-rendering="crispEdges"/></svg><div class="lbl" style="left:-3px;top:13px;width:29px;">aF8</div></div>
<div class="btn" style="left:1011px;top:51px;width:25px;height:25px;"><svg style="position:absolute;left:-1px;top:-1px;" width="25" height="25" viewBox="0 0 25 25"><path d="M6 11.5h11v-8" stroke="#9E9B8D" stroke-width="1" fill="none" shape-rendering="crispEdges"/></svg><div class="lbl" style="left:-3px;top:13px;width:29px;">aF9</div></div>
<div class="btn" style="left:1037px;top:51px;width:25px;height:25px;"><svg style="position:absolute;left:-1px;top:-1px;" width="25" height="25" viewBox="0 0 25 25"><path d="M6 11.5h11v-8M6 8.5h9" stroke="#9E9B8D" stroke-width="1" fill="none" shape-rendering="crispEdges"/></svg><div class="lbl" style="left:-3px;top:13px;width:29px;letter-spacing:-0.2px;">aF10</div></div>
<div class="btn" style="left:1063px;top:51px;width:25px;height:25px;"><svg style="position:absolute;left:-1px;top:-1px;" width="25" height="25" viewBox="0 0 25 25"><path d="M12.5 3v10" stroke="#9E9B8D" stroke-width="1" fill="none" shape-rendering="crispEdges"/><path d="M8 4l9 8M17 4l-9 8" stroke="#9E9B8D" fill="none"/></svg><div class="lbl" style="left:-3px;top:13px;width:29px;">cF9</div></div>
<div style="left:6px;top:87px;width:118px;height:19px;background:#fff;border:1px solid;border-color:#8a877a #fff #fff #8a877a;box-shadow:inset 1px 1px 0 #5a584e;"><div class="t" style="left:3px;top:2px;font-size:12px;">程序</div><div class="btn" style="left:98px;top:1px;width:17px;height:15px;"><svg style="position:absolute;left:3px;top:4px;" width="9" height="6" viewBox="0 0 9 6"><path d="M0.5 0.5h8l-4 4.5z" fill="#000"/></svg></div></div>
<div style="left:133px;top:87px;width:118px;height:19px;background:#fff;border:1px solid;border-color:#8a877a #fff #fff #8a877a;box-shadow:inset 1px 1px 0 #5a584e;"><div class="t" style="left:3px;top:2px;font-size:12px;"></div><div class="btn" style="left:98px;top:1px;width:17px;height:15px;"><svg style="position:absolute;left:3px;top:4px;" width="9" height="6" viewBox="0 0 9 6"><path d="M0.5 0.5h8l-4 4.5z" fill="#000"/></svg></div></div>
<div class="btn" style="left:270px;top:84px;width:23px;height:22px;"><svg style="position:absolute;left:1px;top:1px;" width="18" height="18" viewBox="0 0 18 18"><path d="M2.5 4.5h7l3 3v8h-10z" fill="#fff" stroke="#000" stroke-width="1.5"/><circle cx="9.5" cy="5" r="3.2" fill="#fff" stroke="#0A0AB0" stroke-width="1.3"/><path d="M8 3l3 4" stroke="#0A0AB0"/><path d="M11.5 7.5l3.5 4" stroke="#101060" stroke-width="1.8"/></svg></div>
<div class="btnp" style="left:293px;top:84px;width:23px;height:22px;"><svg style="position:absolute;left:1px;top:1px;" width="18" height="18" viewBox="0 0 18 18"><path d="M3.5 1v15" stroke="#000" stroke-dasharray="1.5 1.5"/><path d="M1.5 4.5h4v3h-4z" fill="#fff" stroke="#0000C0"/><path d="M5.5 6h3M10 8v7.5M10 10.5h3M10 14.5h3" stroke="#0000C0" fill="none" stroke-width="1.3"/><rect x="8" y="4.5" width="4.5" height="3.5" fill="#E020C0" stroke="none" stroke-width="1" /><rect x="12.5" y="9" width="4" height="3" fill="#1010D0" stroke="none" stroke-width="1" /><rect x="12.5" y="13" width="4" height="3" fill="#1010D0" stroke="none" stroke-width="1" /></svg></div>
<div style="left:322px;top:83px;width:1px;height:26px;background:#ACA899;"></div><div style="left:323px;top:83px;width:1px;height:26px;background:#fff;"></div>
<div class="btn" style="left:330px;top:84px;width:23px;height:22px;"><svg style="position:absolute;left:1px;top:1px;" width="18" height="18" viewBox="0 0 18 18"><rect x="4" y="3" width="4" height="4" fill="#9E9B8D"/><rect x="10" y="3" width="4" height="4" fill="#9E9B8D"/><path d="M6 7v2h6v-2M9 9v2" stroke="#9E9B8D" fill="none"/><rect x="7" y="11" width="4" height="4" fill="none" stroke="#9E9B8D"/></svg></div>
<div class="btn" style="left:353px;top:84px;width:23px;height:22px;"><svg style="position:absolute;left:1px;top:1px;" width="18" height="18" viewBox="0 0 18 18"><rect x="3.5" y="2.5" width="6" height="7" fill="none" stroke="#9E9B8D"/><path d="M5 4.5h3M5 6.5h3" stroke="#9E9B8D"/><path d="M12 2l3 5h-5z" fill="#9E9B8D"/><rect x="10" y="7" width="5" height="4" fill="#9E9B8D"/><rect x="3" y="11.5" width="13" height="4" fill="#9E9B8D"/></svg></div>
<div style="left:382px;top:83px;width:1px;height:26px;background:#ACA899;"></div><div style="left:383px;top:83px;width:1px;height:26px;background:#fff;"></div>
<div class="btn" style="left:389px;top:84px;width:23px;height:22px;"><svg style="position:absolute;left:1px;top:1px;" width="18" height="18" viewBox="0 0 18 18"><rect x="2.5" y="2.5" width="4" height="4" fill="none" stroke="#9E9B8D"/><path d="M4.5 6.5v7h4M7 11.5l2 2l-2 2" stroke="#9E9B8D" fill="none"/><rect x="9.5" y="2.5" width="6" height="13" fill="none" stroke="#9E9B8D"/><path d="M11 5h3M11 7h3M11 9h3M11 11h3M11 13h3" stroke="#9E9B8D"/></svg></div>
<div class="btn" style="left:427px;top:85px;width:25px;height:25px;"><svg style="position:absolute;left:-1px;top:-1px;" width="25" height="25" viewBox="0 0 25 25"><path d="M4 8.5h4M16 8.5h4.500M8.5 3.500v9.500M15.5 3.500v9.500" stroke="#9E9B8D" stroke-width="1" fill="none" shape-rendering="crispEdges"/></svg><div class="lbl" style="left:-3px;top:13px;width:29px;">F5</div></div>
<div class="btn" style="left:453px;top:85px;width:25px;height:25px;"><svg style="position:absolute;left:-1px;top:-1px;" width="25" height="25" viewBox="0 0 25 25"><path d="M4.5 3.500v5h3M7.5 3.500v9.500M15.5 3.500v9.500M15.5 8.5h5v-5" stroke="#9E9B8D" stroke-width="1" fill="none" shape-rendering="crispEdges"/></svg><div class="lbl" style="left:-3px;top:13px;width:29px;">sF5</div></div>
<div class="btn" style="left:479px;top:85px;width:25px;height:25px;"><svg style="position:absolute;left:-1px;top:-1px;" width="25" height="25" viewBox="0 0 25 25"><path d="M5 8.5h4M16 8.5h4.500M9.5 3.500v9.500M15.5 3.500v9.500" stroke="#9E9B8D" stroke-width="1" fill="none" shape-rendering="crispEdges"/><path d="M8.500 13L15 3.500" stroke="#9E9B8D" fill="none"/></svg><div class="lbl" style="left:-3px;top:13px;width:29px;">F6</div></div>
<div class="btn" style="left:505px;top:85px;width:25px;height:25px;"><svg style="position:absolute;left:-1px;top:-1px;" width="25" height="25" viewBox="0 0 25 25"><path d="M4.5 3.500v5h3M7.5 3.500v9.500M17.5 3.500v9.500M17.5 8.5h3v-5" stroke="#9E9B8D" stroke-width="1" fill="none" shape-rendering="crispEdges"/><path d="M10 13L15.500 3.500" stroke="#9E9B8D" fill="none"/></svg><div class="lbl" style="left:-3px;top:13px;width:29px;">sF6</div></div>
<div class="btn" style="left:531px;top:85px;width:25px;height:25px;"><svg style="position:absolute;left:-1px;top:-1px;" width="25" height="25" viewBox="0 0 25 25"><path d="M4.500 8.5h3M17.500 8.5h3" stroke="#9E9B8D" stroke-width="1" fill="none" shape-rendering="crispEdges"/><circle cx="12.5" cy="8.3" r="4.7" fill="none" stroke="#9E9B8D" stroke-width="1"/></svg><div class="lbl" style="left:-3px;top:13px;width:29px;">F7</div></div>
<div class="btn" style="left:557px;top:85px;width:25px;height:25px;"><svg style="position:absolute;left:-1px;top:-1px;" width="25" height="25" viewBox="0 0 25 25"><path d="M4.500 8.5h3.500M11 3.5h-3v9h3M15.500 3.5h3v9h-3M18.500 8.5h3.500" stroke="#9E9B8D" stroke-width="1" fill="none" shape-rendering="crispEdges"/></svg><div class="lbl" style="left:-3px;top:13px;width:29px;">F8</div></div>
<div class="btn" style="left:589px;top:85px;width:25px;height:25px;"><svg style="position:absolute;left:-1px;top:-1px;" width="25" height="25" viewBox="0 0 25 25"><path d="M4.500 7.5h16.500" stroke="#9E9B8D" stroke-width="1" fill="none" shape-rendering="crispEdges"/></svg><div class="lbl" style="left:-3px;top:13px;width:29px;">F9</div></div>
<div class="btn" style="left:615px;top:85px;width:25px;height:25px;"><svg style="position:absolute;left:-1px;top:-1px;" width="25" height="25" viewBox="0 0 25 25"><path d="M12.5 3v10" stroke="#9E9B8D" stroke-width="1" fill="none" shape-rendering="crispEdges"/></svg><div class="lbl" style="left:-3px;top:13px;width:29px;">sF9</div></div>
<div class="btn" style="left:641px;top:85px;width:25px;height:25px;"><svg style="position:absolute;left:-1px;top:-1px;" width="25" height="25" viewBox="0 0 25 25"><path d="M4 7.5h17" stroke="#9E9B8D" stroke-width="1" fill="none" shape-rendering="crispEdges"/><path d="M7.500 3l9.500 9.500M17 3l-9.500 9.500" stroke="#9E9B8D" fill="none"/></svg><div class="lbl" style="left:-3px;top:13px;width:29px;">cF9</div></div>
<div class="btn" style="left:667px;top:85px;width:25px;height:25px;"><svg style="position:absolute;left:-1px;top:-1px;" width="25" height="25" viewBox="0 0 25 25"><path d="M11.5 3v10" stroke="#9E9B8D" stroke-width="1" fill="none" shape-rendering="crispEdges"/><path d="M7 3.500l9.500 9M16.500 3.500l-9.500 9" stroke="#9E9B8D" fill="none"/></svg><div class="lbl" style="left:-3px;top:13px;width:29px;letter-spacing:-0.2px;">cF10</div></div>
<div class="btn" style="left:699px;top:85px;width:25px;height:25px;"><svg style="position:absolute;left:-1px;top:-1px;" width="25" height="25" viewBox="0 0 25 25"><path d="M4.500 8.5h4M15.500 8.5h5.500M8.5 3.500v9.500M15.5 3.500v9.500" stroke="#9E9B8D" stroke-width="1" fill="none" shape-rendering="crispEdges"/><path d="M12 13V3.500M10 6.500l2-3l2 3" stroke="#9E9B8D" fill="none"/></svg><div class="lbl" style="left:-3px;top:13px;width:29px;">sF7</div></div>
<div class="btn" style="left:725px;top:85px;width:25px;height:25px;"><svg style="position:absolute;left:-1px;top:-1px;" width="25" height="25" viewBox="0 0 25 25"><path d="M4.500 8.5h4M15.500 8.5h5.500M8.5 3.500v9.500M15.5 3.500v9.500" stroke="#9E9B8D" stroke-width="1" fill="none" shape-rendering="crispEdges"/><path d="M12 3.500V13M10 10l2 3l2-3" stroke="#9E9B8D" fill="none"/></svg><div class="lbl" style="left:-3px;top:13px;width:29px;">sF8</div></div>
<div class="btn" style="left:751px;top:85px;width:25px;height:25px;"><svg style="position:absolute;left:-1px;top:-1px;" width="25" height="25" viewBox="0 0 25 25"><path d="M4.5 3.500v5h3M7.5 3.500v9.500M16.5 3.500v9.500M16.5 8.5h4v-5" stroke="#9E9B8D" stroke-width="1" fill="none" shape-rendering="crispEdges"/><path d="M12 13V3.500M10 6.500l2-3l2 3" stroke="#9E9B8D" fill="none"/></svg><div class="lbl" style="left:-3px;top:13px;width:29px;">aF7</div></div>
<div class="btn" style="left:777px;top:85px;width:25px;height:25px;"><svg style="position:absolute;left:-1px;top:-1px;" width="25" height="25" viewBox="0 0 25 25"><path d="M4.5 3.500v5h3M7.5 3.500v9.500M16.5 3.500v9.500M16.5 8.5h4v-5" stroke="#9E9B8D" stroke-width="1" fill="none" shape-rendering="crispEdges"/><path d="M12 3.500V13M10 10l2 3l2-3" stroke="#9E9B8D" fill="none"/></svg><div class="lbl" style="left:-3px;top:13px;width:29px;">aF8</div></div>
<div class="btn" style="left:809px;top:85px;width:25px;height:25px;"><svg style="position:absolute;left:-1px;top:-1px;" width="25" height="25" viewBox="0 0 25 25"><path d="M4.500 8.5h4M15.500 8.5h5.500M8.5 3.500v9.500M15.5 3.500v9.500" stroke="#9E9B8D" stroke-width="1" fill="none" shape-rendering="crispEdges"/><path d="M12 13V3.500M10 6.500l2-3l2 3" stroke="#9E9B8D" fill="none"/><path d="M9.500 12L14.500 5.500" stroke="#9E9B8D" fill="none"/></svg><div class="lbl" style="left:-3px;top:13px;width:29px;letter-spacing:-0.2px;">saF5</div></div>
<div class="btn" style="left:835px;top:85px;width:25px;height:25px;"><svg style="position:absolute;left:-1px;top:-1px;" width="25" height="25" viewBox="0 0 25 25"><path d="M4.500 8.5h4M15.500 8.5h5.500M8.5 3.500v9.500M15.5 3.500v9.500" stroke="#9E9B8D" stroke-width="1" fill="none" shape-rendering="crispEdges"/><path d="M12 3.500V13M10 10l2 3l2-3" stroke="#9E9B8D" fill="none"/><path d="M9.500 12L14.500 5.500" stroke="#9E9B8D" fill="none"/></svg><div class="lbl" style="left:-3px;top:13px;width:29px;letter-spacing:-0.2px;">saF6</div></div>
<div class="btn" style="left:861px;top:85px;width:25px;height:25px;"><svg style="position:absolute;left:-1px;top:-1px;" width="25" height="25" viewBox="0 0 25 25"><path d="M4.5 3.500v5h3M7.5 3.500v9.500M16.5 3.500v9.500M16.5 8.5h4v-5" stroke="#9E9B8D" stroke-width="1" fill="none" shape-rendering="crispEdges"/><path d="M12 13V3.500M10 6.500l2-3l2 3" stroke="#9E9B8D" fill="none"/><path d="M9.500 12L14.500 5.500" stroke="#9E9B8D" fill="none"/></svg><div class="lbl" style="left:-3px;top:13px;width:29px;letter-spacing:-0.2px;">saF7</div></div>
<div class="btn" style="left:887px;top:85px;width:25px;height:25px;"><svg style="position:absolute;left:-1px;top:-1px;" width="25" height="25" viewBox="0 0 25 25"><path d="M4.5 3.500v5h3M7.5 3.500v9.500M16.5 3.500v9.500M16.5 8.5h4v-5" stroke="#9E9B8D" stroke-width="1" fill="none" shape-rendering="crispEdges"/><path d="M12 3.500V13M10 10l2 3l2-3" stroke="#9E9B8D" fill="none"/><path d="M9.500 12L14.500 5.500" stroke="#9E9B8D" fill="none"/></svg><div class="lbl" style="left:-3px;top:13px;width:29px;letter-spacing:-0.2px;">saF8</div></div>
<div class="btn" style="left:919px;top:85px;width:25px;height:25px;"><svg style="position:absolute;left:-1px;top:-1px;" width="25" height="25" viewBox="0 0 25 25"><path d="M12.500 13V3M9.500 7l3-4l3 4" stroke="#9E9B8D" fill="none"/></svg><div class="lbl" style="left:-3px;top:13px;width:29px;">aF5</div></div>
<div class="btn" style="left:945px;top:85px;width:25px;height:25px;"><svg style="position:absolute;left:-1px;top:-1px;" width="25" height="25" viewBox="0 0 25 25"><path d="M12.500 3V13M9.500 9l3 4l3-4" stroke="#9E9B8D" fill="none"/></svg><div class="lbl" style="left:-3px;top:13px;width:29px;letter-spacing:-0.2px;">caF5</div></div>
<div class="btn" style="left:971px;top:85px;width:25px;height:25px;"><svg style="position:absolute;left:-1px;top:-1px;" width="25" height="25" viewBox="0 0 25 25"><path d="M4 9.5h17" stroke="#9E9B8D" stroke-width="1" fill="none" shape-rendering="crispEdges"/><path d="M9 13L16 5" stroke="#9E9B8D" fill="none"/></svg><div class="lbl" style="left:-3px;top:13px;width:29px;letter-spacing:-0.6px;">caF10</div></div>
<div class="btn" style="left:997px;top:85px;width:25px;height:25px;"><svg style="position:absolute;left:-1px;top:-1px;" width="25" height="25" viewBox="0 0 25 25"><path d="M5.5 13v-5h14v5.500M5.5 4.5h14" stroke="#9E9B8D" stroke-width="1" fill="none" shape-rendering="crispEdges"/></svg><div class="lbl" style="left:-3px;top:13px;width:29px;">F10</div></div>
<div class="btn" style="left:1023px;top:85px;width:25px;height:25px;"><svg style="position:absolute;left:-1px;top:-1px;" width="25" height="25" viewBox="0 0 25 25"><path d="M4 5.5h17M8.5 5.5v6M8.5 11.5h12" stroke="#9E9B8D" stroke-width="1" fill="none" shape-rendering="crispEdges"/><path d="M9 6l7 5M16 6l-7 5" stroke="#9E9B8D" fill="none"/></svg><div class="lbl" style="left:-3px;top:13px;width:29px;">aF9</div></div>
<div class="btn" style="left:6px;top:119px;width:23px;height:22px;"><svg style="position:absolute;left:1px;top:1px;" width="18" height="18" viewBox="0 0 18 18"><rect x="2.5" y="2.5" width="8" height="5" fill="none" stroke="#9E9B8D"/><path d="M6.5 2.5v5M11 5h3v3M4.5 8v5h3M6 11l2 2l-2 2" stroke="#9E9B8D" fill="none"/><rect x="9" y="10" width="7" height="5.5" fill="#9E9B8D"/></svg></div>
<div class="btnp" style="left:35px;top:119px;width:23px;height:22px;"><svg style="position:absolute;left:1px;top:1px;" width="18" height="18" viewBox="0 0 18 18"><path d="M1 4.5h4M7 4.5h4M13 4.5h4M5.5 2.5v4M7.5 2.5v4M11.5 2.5v4M13.5 2.5v4M1 10.5h4M5.5 8.5v4M7.5 8.5v4" stroke="#0000C0" fill="none"/><path d="M8 10.5h2v4h2M10 10.5h7M12 14.5h5" stroke="#0000C0" fill="none" stroke-dasharray="2 1"/></svg></div>
<div class="btn" style="left:58px;top:119px;width:23px;height:22px;"><svg style="position:absolute;left:1px;top:1px;" width="18" height="18" viewBox="0 0 18 18"><path d="M1 5.5h4M7 5.5h4M5.5 3.5v4M7.5 3.5v4M1 11.5h4M5.5 9.5v4M7.5 9.5v4" stroke="#0000C0" fill="none"/><path d="M8 11.5h2v4h2M10 11.5h7M12 15.5h5" stroke="#0000C0" fill="none" stroke-dasharray="2 1"/><path d="M9 7l6-6l2.5 2.5l-6 6z" fill="#E02020"/><path d="M9 7l-1 3.5l3.5-1z" fill="#E0C020"/></svg></div>
<div class="btn" style="left:81px;top:119px;width:23px;height:22px;"><svg style="position:absolute;left:1px;top:1px;" width="18" height="18" viewBox="0 0 18 18"><circle cx="10" cy="6.5" r="5.2" fill="#fff" stroke="#0A0AB0" stroke-width="1.3"/><path d="M13.5 10.5l3.5 4" stroke="#101060" stroke-width="1.8"/><rect x="5.5" y="3.5" width="6" height="8" fill="#fff" stroke="#404080" stroke-width="1" /><path d="M7 6h3M7 8h3" stroke="#404080"/><rect x="1.5" y="11" width="4.5" height="4.5" fill="#E020A0" stroke="#400040" stroke-width="1" /><rect x="6" y="11" width="3.5" height="4.5" fill="#fff" stroke="#400040" stroke-width="1" /></svg></div>
<div class="btn" style="left:104px;top:119px;width:23px;height:22px;"><svg style="position:absolute;left:1px;top:1px;" width="18" height="18" viewBox="0 0 18 18"><circle cx="10" cy="7" r="5" fill="none" stroke="#9E9B8D"/><path d="M6 12l7-8l2 2l-7 8z" fill="#9E9B8D"/><rect x="2" y="11" width="5" height="5" fill="#9E9B8D"/><path d="M14 11l3 4" stroke="#9E9B8D"/></svg></div>
<div class="btn" style="left:133px;top:119px;width:23px;height:22px;"><svg style="position:absolute;left:1px;top:1px;" width="18" height="18" viewBox="0 0 18 18"><rect x="3" y="2.5" width="12" height="6" rx="2" fill="none" stroke="#9E9B8D" stroke-width="1.5"/><rect x="6" y="4.5" width="6" height="2" fill="#9E9B8D"/><rect x="5" y="9" width="8" height="3" fill="#9E9B8D"/><rect x="4" y="12" width="4" height="4" fill="#9E9B8D"/><rect x="10" y="12" width="4" height="4" fill="none" stroke="#9E9B8D"/></svg></div>
<div class="btn" style="left:156px;top:119px;width:23px;height:22px;"><svg style="position:absolute;left:1px;top:1px;" width="18" height="18" viewBox="0 0 18 18"><rect x="3" y="2.5" width="12" height="6" rx="2" fill="none" stroke="#9E9B8D" stroke-width="1.5"/><path d="M3 2l12 13M15 2l-12 13" stroke="#9E9B8D" stroke-width="1.6"/><rect x="6" y="12" width="6" height="4" fill="#9E9B8D"/></svg></div>
<div class="btn" style="left:185px;top:119px;width:23px;height:22px;"><svg style="position:absolute;left:1px;top:1px;" width="18" height="18" viewBox="0 0 18 18"><path d="M2 4.5h5M2 2.5v4M5 2.5v4" stroke="#9E9B8D" fill="none"/><path d="M6 12l7-9l3 2l-7 9z" fill="#9E9B8D"/><path d="M2 11l2 2M4 11l-2 2M6 14l2 2M8 14l-2 2M10 14l2 2M12 14l-2 2M14 14l2 2M16 14l-2 2M2 14l2 2M4 14l-2 2" stroke="#9E9B8D"/></svg></div>
<div class="btn" style="left:208px;top:119px;width:23px;height:22px;"><svg style="position:absolute;left:1px;top:1px;" width="18" height="18" viewBox="0 0 18 18"><path d="M3.5 2v13M3.5 12.5h12M7.5 11v3M11 11v3" stroke="#9E9B8D" fill="none"/><path d="M7 10l6-8l3 2l-6 8z" fill="#9E9B8D"/><path d="M5 3l2 2M7 3l-2 2M5 7l2 2M7 7l-2 2" stroke="#9E9B8D"/></svg></div>
<div class="btn" style="left:231px;top:119px;width:23px;height:22px;"><svg style="position:absolute;left:1px;top:1px;" width="18" height="18" viewBox="0 0 18 18"><path d="M6 9l6-7l3 2l-6 7z" fill="#9E9B8D"/><path d="M2 7l2 2M4 7l-2 2M13 8l2 2M15 8l-2 2" stroke="#9E9B8D"/><text x="9" y="16" font-family="Liberation Sans,sans-serif" font-size="6.5" fill="#9E9B8D" text-anchor="middle">–&lt; &gt;|</text></svg></div>
<div class="btn" style="left:260px;top:119px;width:23px;height:22px;"><svg style="position:absolute;left:1px;top:1px;" width="18" height="18" viewBox="0 0 18 18"><rect x="2.5" y="2.5" width="5" height="6" fill="none" stroke="#9E9B8D"/><rect x="2.5" y="10.5" width="5" height="5" fill="none" stroke="#9E9B8D"/><path d="M5 2.5v13M2.5 5.5h5M2.5 13h5" stroke="#9E9B8D"/><rect x="10.5" y="2.5" width="5" height="13" fill="none" stroke="#9E9B8D"/><path d="M13 2.5v13M10.5 7h5M10.5 11h5M7.5 9h3M9 7.5l1.5 1.5l-1.5 1.5" stroke="#9E9B8D" fill="none"/></svg></div>
<div class="btn" style="left:283px;top:119px;width:23px;height:22px;"><svg style="position:absolute;left:1px;top:1px;" width="18" height="18" viewBox="0 0 18 18"><circle cx="9" cy="9.5" r="6.8" fill="#fff" stroke="#0A0AB0" stroke-width="1.5"/><g transform="translate(1 1.5)"><path d="M3.5 6.5h2.5M9.5 6.5h3M6.5 4v5M9 4v5" stroke="#000" fill="none"/><path d="M3.5 10.5h3" stroke="#000" stroke-dasharray="1.5 1"/><path d="M8 10.5l2-2l2 2l-2 2z" stroke="#000" fill="none"/></g><path d="M14 14.5L17.5 18.0" stroke="#101040" stroke-width="2.2"/></svg></div>
<div class="btn" style="left:312px;top:119px;width:23px;height:22px;"><svg style="position:absolute;left:1px;top:1px;" width="18" height="18" viewBox="0 0 18 18"><path d="M5 2h10l-3 4.5l3 0l-2 4.5h2v5h-12v-5l3-4.5h-3z" fill="#9E9B8D"/></svg></div>
<div class="btn" style="left:335px;top:119px;width:23px;height:22px;"><svg style="position:absolute;left:1px;top:1px;" width="18" height="18" viewBox="0 0 18 18"><rect x="4" y="2" width="10" height="4" fill="#9E9B8D"/><path d="M9 6v4M6.5 8l2.5 3l2.5-3z" fill="#9E9B8D" stroke="#9E9B8D"/><rect x="4" y="12" width="10" height="4" fill="#9E9B8D"/></svg></div>
<div class="btn" style="left:364px;top:119px;width:23px;height:22px;"><svg style="position:absolute;left:1px;top:1px;" width="18" height="18" viewBox="0 0 18 18"><rect x="6.5" y="1.5" width="10" height="9" fill="#fff" stroke="#0A0AB0" stroke-width="1.2" /><rect x="1.5" y="10" width="6" height="6" fill="#fff" stroke="#0A0AB0" stroke-width="1.2" /><path d="M7 11l4-4M8.5 6.5h3v3" stroke="#000060" fill="none" stroke-width="1.2"/></svg></div>
<div class="btn" style="left:387px;top:119px;width:23px;height:22px;"><svg style="position:absolute;left:1px;top:1px;" width="18" height="18" viewBox="0 0 18 18"><rect x="10.5" y="1.5" width="6" height="6" fill="#fff" stroke="#0A0AB0" stroke-width="1.2" /><rect x="1.5" y="6.5" width="10" height="9.5" fill="#fff" stroke="#0A0AB0" stroke-width="1.2" /><path d="M5 13l4-4M6.5 8.5h3v3" stroke="#000060" fill="none" stroke-width="1.2"/></svg></div>
<div class="btn" style="left:416px;top:119px;width:23px;height:22px;"><svg style="position:absolute;left:1px;top:1px;" width="18" height="18" viewBox="0 0 18 18"><circle cx="9" cy="9.5" r="6.8" fill="#fff" stroke="#0A0AB0" stroke-width="1.5"/><g transform="translate(1 1.5)"><rect x="5.5" y="2.5" width="5" height="3" fill="#fff" stroke="#000" stroke-width="1" /><path d="M3 8h10M8 5.5v6" stroke="#208020" stroke-dasharray="2 1"/><rect x="4.5" y="10.5" width="7" height="4" fill="#F0E020" stroke="#000" stroke-width="1" /></g><path d="M14 14.5L17.5 18.0" stroke="#101040" stroke-width="2.2"/></svg></div>
<div class="btn" style="left:445px;top:119px;width:23px;height:22px;"><svg style="position:absolute;left:1px;top:1px;" width="18" height="18" viewBox="0 0 18 18"><path d="M5.5 1v16M2 4.5h7M2 9h7M2 13.5h7" stroke="#9E9B8D" stroke-width="1.5"/><rect x="3.5" y="3" width="4" height="3" fill="#9E9B8D"/><rect x="3.5" y="12" width="4" height="3" fill="#9E9B8D"/><path d="M13.5 2v13M11.5 5l2-3l2 3M11.5 12l2 3l2-3" stroke="#9E9B8D" fill="none"/></svg></div>
<div class="btn" style="left:468px;top:119px;width:23px;height:22px;"><svg style="position:absolute;left:1px;top:1px;" width="18" height="18" viewBox="0 0 18 18"><path d="M5.5 1v16M2 4.5h7M2 9h7M2 13.5h7" stroke="#9E9B8D" stroke-width="1.5"/><rect x="3.5" y="3" width="4" height="3" fill="#9E9B8D"/><rect x="3.5" y="12" width="4" height="3" fill="#9E9B8D"/><path d="M13.5 2v6M11.5 5l2-3l2 3M13.5 10v5M11.5 12l2 3l2-3z" stroke="#9E9B8D" fill="#9E9B8D"/></svg></div>
<div class="btn" style="left:491px;top:119px;width:23px;height:22px;"><svg style="position:absolute;left:1px;top:1px;" width="18" height="18" viewBox="0 0 18 18"><path d="M5.5 1v16M2 4.5h7M2 9h7M2 13.5h7" stroke="#9E9B8D" stroke-width="1.5"/><rect x="3.5" y="3" width="4" height="3" fill="#9E9B8D"/><rect x="3.5" y="12" width="4" height="3" fill="#9E9B8D"/><path d="M10 5h5v8h-3M13.5 11l-2 2l2 2" stroke="#9E9B8D" fill="none" stroke-width="1.3"/></svg></div>
<div class="btn" style="left:520px;top:119px;width:23px;height:22px;"><svg style="position:absolute;left:1px;top:1px;" width="18" height="18" viewBox="0 0 18 18"><rect x="2.5" y="3.5" width="13" height="11" fill="#d8d5c5" stroke="#9E9B8D" stroke-width="2"/><rect x="5" y="7" width="8" height="5" fill="#9E9B8D"/><path d="M7 8v3M9 8v3M11 8v3" stroke="#eee"/></svg></div>
<div style="left:3px;top:152px;width:93px;height:1px;background:#fff;"></div>
<div style="left:3px;top:153px;width:93px;height:1px;background:#F2F0E6;"></div>
<div style="left:3px;top:154px;width:93px;height:1px;background:#ACA899;"></div>
<div style="left:96px;top:152px;width:1px;height:3px;background:#ACA899;"></div>
<div style="left:3px;top:156px;width:93px;height:1px;background:#fff;"></div>
<div style="left:3px;top:157px;width:93px;height:1px;background:#F2F0E6;"></div>
<div style="left:3px;top:158px;width:93px;height:1px;background:#ACA899;"></div>
<div style="left:96px;top:156px;width:1px;height:3px;background:#ACA899;"></div>
<div class="btn" style="left:103px;top:149px;width:12px;height:12px;"><svg style="position:absolute;left:0px;top:0px;" width="10" height="9" viewBox="0 0 10 9"><path d="M1.5 1L8.5 8M8.5 1L1.5 8" stroke="#000" stroke-width="1.6"/></svg></div>
<div style="left:5px;top:167px;width:112px;height:557px;border:1px solid;border-color:#fff #716F64 #716F64 #fff;box-shadow:inset -1px -1px 0 #ACA899;"></div>
<div style="left:7px;top:169px;width:106px;height:551px;background:#fff;border:1px solid;border-color:#8a877a #f4f2ea #f4f2ea #8a877a;box-shadow:inset 1px 1px 0 #5a584e;"></div>
<div style="left:121px;top:146px;width:4px;height:602px;background:#F6F5EE;"></div>
<div style="left:0px;top:748px;width:126px;height:1px;background:#8a877a;"></div>
<div style="left:35px;top:187px;width:1px;height:72px;border-left:1px dotted #9a9a9a;"></div>
<div style="left:21px;top:179px;width:7px;height:1px;border-top:1px dotted #9a9a9a;"></div>
<div style="left:40px;top:195px;width:7px;height:1px;border-top:1px dotted #9a9a9a;"></div>
<div style="left:54px;top:203px;width:1px;height:9px;border-left:1px dotted #9a9a9a;"></div>
<div style="left:54px;top:211px;width:11px;height:1px;border-top:1px dotted #9a9a9a;"></div>
<div style="left:40px;top:227px;width:7px;height:1px;border-top:1px dotted #9a9a9a;"></div>
<div style="left:40px;top:243px;width:7px;height:1px;border-top:1px dotted #9a9a9a;"></div>
<div style="left:40px;top:259px;width:7px;height:1px;border-top:1px dotted #9a9a9a;"></div>
<div style="left:12px;top:175px;width:9px;height:9px;background:#fff;border:1px solid #919191;"><svg style="position:absolute;left:-1px;top:-1px;" width="9" height="9" viewBox="0 0 9 9"><path d="M2 4.5h5" stroke="#000"/></svg></div>
<div style="left:31px;top:191px;width:9px;height:9px;background:#fff;border:1px solid #919191;"><svg style="position:absolute;left:-1px;top:-1px;" width="9" height="9" viewBox="0 0 9 9"><path d="M2 4.5h5" stroke="#000"/></svg></div>
<div style="left:31px;top:223px;width:9px;height:9px;background:#fff;border:1px solid #919191;"><svg style="position:absolute;left:-1px;top:-1px;" width="9" height="9" viewBox="0 0 9 9"><path d="M2 4.5h5" stroke="#000"/><path d="M4.5 2v5" stroke="#000"/></svg></div>
<div style="left:31px;top:239px;width:9px;height:9px;background:#fff;border:1px solid #919191;"><svg style="position:absolute;left:-1px;top:-1px;" width="9" height="9" viewBox="0 0 9 9"><path d="M2 4.5h5" stroke="#000"/><path d="M4.5 2v5" stroke="#000"/></svg></div>
<div style="left:31px;top:255px;width:9px;height:9px;background:#fff;border:1px solid #919191;"><svg style="position:absolute;left:-1px;top:-1px;" width="9" height="9" viewBox="0 0 9 9"><path d="M2 4.5h5" stroke="#000"/><path d="M4.5 2v5" stroke="#000"/></svg></div>
<svg style="position:absolute;left:27px;top:171px;" width="16" height="16" viewBox="0 0 16 16"><path d="M0 3h11l4 3v10h-15z" fill="#20C820"/><path d="M0 3h11l4 3v10h-15z" fill="none" stroke="#108010"/><circle cx="8" cy="5" r="2" fill="#C040C0" stroke="#000" stroke-width="1"/><circle cx="4" cy="10" r="2" fill="#40E0F0" stroke="#000" stroke-width="1"/><circle cx="11" cy="11" r="2" fill="#F0E040" stroke="#000" stroke-width="1"/><path d="M6 6l-2 3M10 6l1 3" stroke="#fff"/></svg>
<svg style="position:absolute;left:46px;top:187px;" width="16" height="16" viewBox="0 0 16 16"><path d="M0.5 0.5h11l4 4v11h-15z" fill="#fff" stroke="#000"/><path d="M11.5 0.5v4h4" fill="#ddd" stroke="#000"/><path d="M2 6.5h3M7 6.5h3M5.5 4.5v4M7.5 4.5v4M2 11.5h3M5.5 9.5v4M7.5 9.5v4" stroke="#0000C0" fill="none"/><path d="M8 11.5h5M10 6.5h3" stroke="#0000C0" stroke-dasharray="2 1"/></svg>
<svg style="position:absolute;left:65px;top:203px;" width="16" height="16" viewBox="0 0 16 16"><path d="M0.5 0.5h11l4 4v11h-15z" fill="#fff" stroke="#000"/><path d="M11.5 0.5v4h4" fill="#ddd" stroke="#000"/><rect x="3" y="3" width="5" height="3.5" fill="#1010C0" stroke="none" stroke-width="1" /><rect x="6" y="11" width="5" height="3" fill="#fff" stroke="#1010C0" stroke-width="1" /><rect x="3" y="7.5" width="4" height="3" fill="#fff" stroke="#1010C0" stroke-width="1" /><path d="M5.5 6.5v1M5.5 10.5v2h1M8 5h3v6" stroke="#1010C0" fill="none"/></svg>
<svg style="position:absolute;left:46px;top:219px;" width="16" height="16" viewBox="0 0 16 16"><path d="M0.5 0.5h11l4 4v11h-15z" fill="#fff" stroke="#000"/><path d="M11.5 0.5v4h4" fill="#ddd" stroke="#000"/><rect x="2" y="2" width="4" height="4" fill="#20A020" stroke="none" stroke-width="1" /><rect x="8" y="2" width="4" height="4" fill="#E0E020" stroke="#808000" stroke-width="1" /><path d="M4 6l3 3l3-3M7 9v2" stroke="#A020A0" fill="none" stroke-width="1.3"/><rect x="5" y="11" width="4" height="3.5" fill="#fff" stroke="#A020A0" stroke-width="1" /></svg>
<svg style="position:absolute;left:46px;top:235px;" width="16" height="16" viewBox="0 0 16 16"><path d="M0.5 0.5h11l4 4v11h-15z" fill="#fff" stroke="#000"/><path d="M11.5 0.5v4h4" fill="#ddd" stroke="#000"/><rect x="3" y="8" width="4" height="4" fill="#C04060" stroke="#400" stroke-width="1" /><rect x="8" y="4" width="4" height="4" fill="#40C040" stroke="#040" stroke-width="1" /><path d="M3 13l9-9" stroke="#208020" stroke-width="1.3"/></svg>
<svg style="position:absolute;left:46px;top:251px;" width="16" height="16" viewBox="0 0 16 16"><path d="M0.5 0.5h11l4 4v11h-15z" fill="#fff" stroke="#000"/><path d="M11.5 0.5v4h4" fill="#ddd" stroke="#000"/><rect x="2.5" y="2.5" width="8" height="9" fill="#fff" stroke="#1010C0" stroke-width="1.4" /><path d="M4 5.5h5M4 8.5h5" stroke="#1010C0"/><rect x="9" y="10" width="4" height="4" fill="#804040" stroke="#000" stroke-width="1" /></svg>
<div class="t" style="left:47px;top:174px;font-size:12px;">001</div>
<div class="t" style="left:67px;top:190px;font-size:12px;">程序</div>
<div style="left:83px;top:204px;width:32px;height:15px;background:#ECE9D8;"></div>
<div class="t" style="left:86px;top:205px;font-size:12px;"><span class="l6">MAIN</span></div>
<div style="left:67px;top:220px;width:48px;height:16px;overflow:hidden;"><div class="t" style="left:0px;top:2px;font-size:12px;">软元件注释</div></div>
<div class="t" style="left:67px;top:238px;font-size:12px;">参数</div>
<div style="left:67px;top:252px;width:48px;height:16px;overflow:hidden;"><div class="t" style="left:0px;top:2px;font-size:12px;">软元件内存</div></div>
<div class="trackh" style="left:8px;top:702px;width:104px;height:17px;"></div>
<div class="sbtn" style="left:8px;top:702px;width:16px;height:16px;"><svg style="position:absolute;left:-1px;top:-1px;" width="16" height="16" viewBox="0 0 16 16"><path d="M9 3.5L5 7.5L9 11.5" stroke="#4D6185" stroke-width="2.4" fill="none"/></svg></div>
<div class="sbtn" style="left:26px;top:702px;width:58px;height:16px;"><div style="left:24px;top:4px;width:1px;height:6px;background:#EEF4FF;box-shadow:1px 0 0 #8c9fdc;"></div><div style="left:26px;top:4px;width:1px;height:6px;background:#EEF4FF;box-shadow:1px 0 0 #8c9fdc;"></div><div style="left:28px;top:4px;width:1px;height:6px;background:#EEF4FF;box-shadow:1px 0 0 #8c9fdc;"></div><div style="left:30px;top:4px;width:1px;height:6px;background:#EEF4FF;box-shadow:1px 0 0 #8c9fdc;"></div></div>
<div class="sbtn" style="left:96px;top:702px;width:16px;height:16px;"><svg style="position:absolute;left:-1px;top:-1px;" width="16" height="16" viewBox="0 0 16 16"><path d="M6 3.5L10 7.5L6 11.5" stroke="#4D6185" stroke-width="2.4" fill="none"/></svg></div>
<div style="left:5px;top:721px;width:51px;height:22px;background:#ECE9D8;border:1px solid;border-color:#ECE9D8 #716F64 #716F64 #fff;border-top:none;border-radius:0 0 3px 3px;box-shadow:inset -1px -1px 0 #ACA899;"></div>
<div class="t" style="left:12px;top:727px;font-size:12px;">工程</div>
<div style="left:126px;top:145px;width:577px;height:604px;background:#fff;border-left:1px solid #181818;border-top:1px solid #181818;box-shadow:inset 1px 1px 0 #8c8c8c;"></div>
<div class="t" style="left:168px;top:149px;font-size:12px;width:8px;text-align:center;">1</div>
<div class="t" style="left:242px;top:149px;font-size:12px;width:8px;text-align:center;">2</div>
<div class="t" style="left:315px;top:149px;font-size:12px;width:8px;text-align:center;">3</div>
<div class="t" style="left:389px;top:149px;font-size:12px;width:8px;text-align:center;">4</div>
<div class="t" style="left:463px;top:149px;font-size:12px;width:8px;text-align:center;">5</div>
<div class="t" style="left:536px;top:149px;font-size:12px;width:8px;text-align:center;">6</div>
<div class="t" style="left:610px;top:149px;font-size:12px;width:8px;text-align:center;">7</div>
<div class="t" style="left:135px;top:167px;font-size:12px;width:20px;text-align:right;">1</div>
<div class="t" style="left:135px;top:187px;font-size:12px;width:20px;text-align:right;">2</div>
<div class="t" style="left:135px;top:207px;font-size:12px;width:20px;text-align:right;">3</div>
<div class="t" style="left:135px;top:226px;font-size:12px;width:20px;text-align:right;">4</div>
<div class="t" style="left:135px;top:246px;font-size:12px;width:20px;text-align:right;">5</div>
<div class="t" style="left:135px;top:266px;font-size:12px;width:20px;text-align:right;">6</div>
<div class="t" style="left:135px;top:286px;font-size:12px;width:20px;text-align:right;">7</div>
<div class="t" style="left:135px;top:306px;font-size:12px;width:20px;text-align:right;">8</div>
<div class="t" style="left:135px;top:325px;font-size:12px;width:20px;text-align:right;">9</div>
<div class="t" style="left:135px;top:345px;font-size:12px;width:20px;text-align:right;letter-spacing:0.6px;">10</div>
<div class="t" style="left:135px;top:365px;font-size:12px;width:20px;text-align:right;letter-spacing:0.6px;">11</div>
<div class="t" style="left:135px;top:385px;font-size:12px;width:20px;text-align:right;letter-spacing:0.6px;">12</div>
<div class="t" style="left:135px;top:404px;font-size:12px;width:20px;text-align:right;letter-spacing:0.6px;">13</div>
<div class="t" style="left:135px;top:424px;font-size:12px;width:20px;text-align:right;letter-spacing:0.6px;">14</div>
<div class="t" style="left:135px;top:444px;font-size:12px;width:20px;text-align:right;letter-spacing:0.6px;">15</div>
<div class="t" style="left:135px;top:464px;font-size:12px;width:20px;text-align:right;letter-spacing:0.6px;">16</div>
<div class="t" style="left:135px;top:484px;font-size:12px;width:20px;text-align:right;letter-spacing:0.6px;">17</div>
<div class="t" style="left:135px;top:503px;font-size:12px;width:20px;text-align:right;letter-spacing:0.6px;">18</div>
<div class="t" style="left:135px;top:523px;font-size:12px;width:20px;text-align:right;letter-spacing:0.6px;">19</div>
<div class="t" style="left:135px;top:543px;font-size:12px;width:20px;text-align:right;letter-spacing:0.6px;">20</div>
<div class="t" style="left:135px;top:563px;font-size:12px;width:20px;text-align:right;letter-spacing:0.6px;">21</div>
<div class="t" style="left:135px;top:583px;font-size:12px;width:20px;text-align:right;letter-spacing:0.6px;">22</div>
<div class="t" style="left:135px;top:602px;font-size:12px;width:20px;text-align:right;letter-spacing:0.6px;">23</div>
<div class="t" style="left:135px;top:622px;font-size:12px;width:20px;text-align:right;letter-spacing:0.6px;">24</div>
<div class="t" style="left:135px;top:642px;font-size:12px;width:20px;text-align:right;letter-spacing:0.6px;">25</div>
<div class="t" style="left:135px;top:662px;font-size:12px;width:20px;text-align:right;letter-spacing:0.6px;">26</div>
<div class="t" style="left:135px;top:682px;font-size:12px;width:20px;text-align:right;letter-spacing:0.6px;">27</div>
<div class="t" style="left:135px;top:701px;font-size:12px;width:20px;text-align:right;letter-spacing:0.6px;">28</div>
<div class="t" style="left:135px;top:721px;font-size:12px;width:20px;text-align:right;letter-spacing:0.6px;">29</div>
<svg style="position:absolute;left:126px;top:145px;" width="560" height="590" viewBox="0 0 560 590"><rect x="44.5" y="29" width="1.3" height="1.3" fill="#000"/><rect x="118.5" y="29" width="1.3" height="1.3" fill="#000"/><rect x="191.5" y="29" width="1.3" height="1.3" fill="#000"/><rect x="265.5" y="29" width="1.3" height="1.3" fill="#000"/><rect x="339.5" y="29" width="1.3" height="1.3" fill="#000"/><rect x="412.5" y="29" width="1.3" height="1.3" fill="#000"/><rect x="486.5" y="29" width="1.3" height="1.3" fill="#000"/><rect x="44.5" y="88" width="1.3" height="1.3" fill="#000"/><rect x="118.5" y="88" width="1.3" height="1.3" fill="#000"/><rect x="191.5" y="88" width="1.3" height="1.3" fill="#000"/><rect x="265.5" y="88" width="1.3" height="1.3" fill="#000"/><rect x="339.5" y="88" width="1.3" height="1.3" fill="#000"/><rect x="412.5" y="88" width="1.3" height="1.3" fill="#000"/><rect x="486.5" y="88" width="1.3" height="1.3" fill="#000"/><rect x="44.5" y="148" width="1.3" height="1.3" fill="#000"/><rect x="118.5" y="148" width="1.3" height="1.3" fill="#000"/><rect x="191.5" y="148" width="1.3" height="1.3" fill="#000"/><rect x="265.5" y="148" width="1.3" height="1.3" fill="#000"/><rect x="339.5" y="148" width="1.3" height="1.3" fill="#000"/><rect x="412.5" y="148" width="1.3" height="1.3" fill="#000"/><rect x="486.5" y="148" width="1.3" height="1.3" fill="#000"/><rect x="44.5" y="207" width="1.3" height="1.3" fill="#000"/><rect x="118.5" y="207" width="1.3" height="1.3" fill="#000"/><rect x="191.5" y="207" width="1.3" height="1.3" fill="#000"/><rect x="265.5" y="207" width="1.3" height="1.3" fill="#000"/><rect x="339.5" y="207" width="1.3" height="1.3" fill="#000"/><rect x="412.5" y="207" width="1.3" height="1.3" fill="#000"/><rect x="486.5" y="207" width="1.3" height="1.3" fill="#000"/><rect x="44.5" y="266" width="1.3" height="1.3" fill="#000"/><rect x="118.5" y="266" width="1.3" height="1.3" fill="#000"/><rect x="191.5" y="266" width="1.3" height="1.3" fill="#000"/><rect x="265.5" y="266" width="1.3" height="1.3" fill="#000"/><rect x="339.5" y="266" width="1.3" height="1.3" fill="#000"/><rect x="412.5" y="266" width="1.3" height="1.3" fill="#000"/><rect x="486.5" y="266" width="1.3" height="1.3" fill="#000"/><rect x="44.5" y="326" width="1.3" height="1.3" fill="#000"/><rect x="118.5" y="326" width="1.3" height="1.3" fill="#000"/><rect x="191.5" y="326" width="1.3" height="1.3" fill="#000"/><rect x="265.5" y="326" width="1.3" height="1.3" fill="#000"/><rect x="339.5" y="326" width="1.3" height="1.3" fill="#000"/><rect x="412.5" y="326" width="1.3" height="1.3" fill="#000"/><rect x="486.5" y="326" width="1.3" height="1.3" fill="#000"/><rect x="44.5" y="385" width="1.3" height="1.3" fill="#000"/><rect x="118.5" y="385" width="1.3" height="1.3" fill="#000"/><rect x="191.5" y="385" width="1.3" height="1.3" fill="#000"/><rect x="265.5" y="385" width="1.3" height="1.3" fill="#000"/><rect x="339.5" y="385" width="1.3" height="1.3" fill="#000"/><rect x="412.5" y="385" width="1.3" height="1.3" fill="#000"/><rect x="486.5" y="385" width="1.3" height="1.3" fill="#000"/><rect x="44.5" y="445" width="1.3" height="1.3" fill="#000"/><rect x="118.5" y="445" width="1.3" height="1.3" fill="#000"/><rect x="191.5" y="445" width="1.3" height="1.3" fill="#000"/><rect x="265.5" y="445" width="1.3" height="1.3" fill="#000"/><rect x="339.5" y="445" width="1.3" height="1.3" fill="#000"/><rect x="412.5" y="445" width="1.3" height="1.3" fill="#000"/><rect x="486.5" y="445" width="1.3" height="1.3" fill="#000"/><rect x="44.5" y="504" width="1.3" height="1.3" fill="#000"/><rect x="118.5" y="504" width="1.3" height="1.3" fill="#000"/><rect x="191.5" y="504" width="1.3" height="1.3" fill="#000"/><rect x="265.5" y="504" width="1.3" height="1.3" fill="#000"/><rect x="339.5" y="504" width="1.3" height="1.3" fill="#000"/><rect x="412.5" y="504" width="1.3" height="1.3" fill="#000"/><rect x="486.5" y="504" width="1.3" height="1.3" fill="#000"/><rect x="44.5" y="563" width="1.3" height="1.3" fill="#000"/><rect x="118.5" y="563" width="1.3" height="1.3" fill="#000"/><rect x="191.5" y="563" width="1.3" height="1.3" fill="#000"/><rect x="265.5" y="563" width="1.3" height="1.3" fill="#000"/><rect x="339.5" y="563" width="1.3" height="1.3" fill="#000"/><rect x="412.5" y="563" width="1.3" height="1.3" fill="#000"/><rect x="486.5" y="563" width="1.3" height="1.3" fill="#000"/></svg>
<div style="left:161px;top:164px;width:17px;height:19px;background:#FFFFA8;"></div>
<div style="left:164px;top:167px;width:13px;height:14px;background:#00009C;"></div>
<div style="left:178px;top:164px;width:57px;height:19px;background:#00009C;border:1px solid #00009C;border-radius:2px;box-shadow:inset 0 0 0 1px #fff;"></div>
<div class="t" style="left:181px;top:167px;font-size:12px;color:#fff;">0</div>
<div class="track" style="left:686px;top:147px;width:16px;height:584px;"></div>
<div class="sbtn" style="left:686px;top:147px;width:16px;height:16px;"><svg style="position:absolute;left:-1px;top:-1px;" width="16" height="16" viewBox="0 0 16 16"><path d="M3.5 9L7.5 5L11.5 9" stroke="#4D6185" stroke-width="2.4" fill="none"/></svg></div>
<div class="sbtn" style="left:686px;top:163px;width:16px;height:16px;"><div style="left:4px;top:3px;width:6px;height:1px;background:#EEF4FF;box-shadow:0 1px 0 #8c9fdc;"></div><div style="left:4px;top:5px;width:6px;height:1px;background:#EEF4FF;box-shadow:0 1px 0 #8c9fdc;"></div><div style="left:4px;top:7px;width:6px;height:1px;background:#EEF4FF;box-shadow:0 1px 0 #8c9fdc;"></div><div style="left:4px;top:9px;width:6px;height:1px;background:#EEF4FF;box-shadow:0 1px 0 #8c9fdc;"></div></div>
<div class="sbtn" style="left:686px;top:715px;width:16px;height:16px;"><svg style="position:absolute;left:-1px;top:-1px;" width="16" height="16" viewBox="0 0 16 16"><path d="M3.5 5L7.5 9L11.5 5" stroke="#4D6185" stroke-width="2.4" fill="none"/></svg></div>
<div class="trackh" style="left:128px;top:731px;width:558px;height:17px;"></div>
<div class="sbtn" style="left:128px;top:732px;width:16px;height:16px;"><svg style="position:absolute;left:-1px;top:-1px;" width="16" height="16" viewBox="0 0 16 16"><path d="M9 3.5L5 7.5L9 11.5" stroke="#4D6185" stroke-width="2.4" fill="none"/></svg></div>
<div class="sbtn" style="left:144px;top:732px;width:17px;height:16px;"><div style="left:3px;top:4px;width:1px;height:6px;background:#EEF4FF;box-shadow:1px 0 0 #8c9fdc;"></div><div style="left:5px;top:4px;width:1px;height:6px;background:#EEF4FF;box-shadow:1px 0 0 #8c9fdc;"></div><div style="left:7px;top:4px;width:1px;height:6px;background:#EEF4FF;box-shadow:1px 0 0 #8c9fdc;"></div><div style="left:9px;top:4px;width:1px;height:6px;background:#EEF4FF;box-shadow:1px 0 0 #8c9fdc;"></div></div>
<div class="sbtn" style="left:669px;top:732px;width:16px;height:16px;"><svg style="position:absolute;left:-1px;top:-1px;" width="16" height="16" viewBox="0 0 16 16"><path d="M6 3.5L10 7.5L6 11.5" stroke="#4D6185" stroke-width="2.4" fill="none"/></svg></div>
<div style="left:686px;top:731px;width:17px;height:17px;background:#ECE9D8;"></div>
<div style="left:708px;top:145px;width:570px;height:604px;background:#fff;border-left:1px solid #101010;border-top:1px solid #181818;box-shadow:inset 1px 1px 0 #8c8c8c;overflow:hidden;"></div>
<svg style="position:absolute;left:708px;top:145px;" width="554" height="603" viewBox="0 0 554 603"><path d="M81.5 2V603M529.5 2V603M81 32.5H111M111.5 22V42M123.5 22V42M124 32.5H183M183.5 22V42M195.5 22V42M196 32.5H255M255.5 22V42M267.5 22V42M268 32.5H327M327.5 22V42M339.5 22V42M340 32.5H399M399.5 22V42M411.5 22V42M412 32.5H449M506 32.5H522M225.5 32V94M81 94.5H111M111.5 84V104M123.5 84V104M124 94.5H226M81 218.5H111M111.5 208V228M123.5 208V228M124 218.5H183M183.5 208V228M195.5 208V228M196 218.5H255M255.5 208V228M267.5 208V228M268 218.5H327M327.5 208V228M339.5 208V228M340 218.5H399M399.5 208V228M411.5 208V228M412 218.5H449M506 218.5H522M225.5 218V280M81 280.5H111M111.5 270V290M123.5 270V290M124 280.5H226M81 404.5H111M111.5 394V414M123.5 394V414M124 404.5H183M183.5 394V414M195.5 394V414M196 404.5H255M255.5 394V414M267.5 394V414M268 404.5H327M327.5 394V414M339.5 394V414M340 404.5H399M399.5 394V414M411.5 394V414M412 404.5H449M506 404.5H522M225.5 404V466M81 466.5H111M111.5 456V476M123.5 456V476M124 466.5H226M81 590.5H111M111.5 580V600M123.5 580V600M124 590.5H183M183.5 580V600M195.5 580V600M196 590.5H255M255.5 580V600M267.5 580V600M268 590.5H327M327.5 580V600M339.5 580V600M340 590.5H399M399.5 580V600M411.5 580V600M412 590.5H449M506 590.5H522M225.5 590V603M81 156.5H88M138 156.5H154M154 156.5H183M183.5 146V166M195.5 146V166M196 156.5H255M255.5 146V166M267.5 146V166M268 156.5H327M327.5 146V166M339.5 146V166M340 156.5H443M81 342.5H88M138 342.5H154M154 342.5H183M183.5 332V352M195.5 332V352M196 342.5H255M255.5 332V352M267.5 332V352M268 342.5H327M327.5 332V352M339.5 332V352M340 342.5H443M81 528.5H88M138 528.5H154M154 528.5H183M183.5 518V538M195.5 518V538M196 528.5H255M255.5 518V538M267.5 518V538M268 528.5H327M327.5 518V538M339.5 518V538M340 528.5H443" stroke="#000" stroke-width="1" fill="none" shape-rendering="crispEdges"/><path d="M176.5 42.5L200 22.5M248.5 42.5L272 22.5M320.5 42.5L344 22.5M392.5 42.5L416 22.5M514 23L522 32.5L514 42M248.5 228.5L272 208.5M320.5 228.5L344 208.5M392.5 228.5L416 208.5M514 209L522 218.5L514 228M176.5 414.5L200 394.5M248.5 414.5L272 394.5M320.5 414.5L344 394.5M392.5 414.5L416 394.5M514 395L522 404.5L514 414M248.5 600.5L272 580.5M320.5 600.5L344 580.5M392.5 600.5L416 580.5M514 581L522 590.5L514 600M146 147L154 156.5L146 166M248.5 166.5L272 146.5M320.5 166.5L344 146.5M447.5 148Q441 156.5 447.5 165M523 148Q529.5 156.5 523 165M146 333L154 342.5L146 352M248.5 352.5L272 332.5M320.5 352.5L344 332.5M447.5 334Q441 342.5 447.5 351M523 334Q529.5 342.5 523 351M146 519L154 528.5L146 538M248.5 538.5L272 518.5M320.5 538.5L344 518.5M447.5 520Q441 528.5 447.5 537M523 520Q529.5 528.5 523 537" stroke="#000" stroke-width="1.1" fill="none"/><g font-family="Liberation Mono,monospace" font-size="17" fill="#000"><text x="78.5" y="37" text-anchor="end" textLength="7.5" lengthAdjust="spacingAndGlyphs">0</text><text x="117.5" y="17" text-anchor="middle" textLength="31.5" lengthAdjust="spacingAndGlyphs">X036</text><text x="189.5" y="17" text-anchor="middle" textLength="31.5" lengthAdjust="spacingAndGlyphs">M502</text><text x="261.5" y="17" text-anchor="middle" textLength="23.5" lengthAdjust="spacingAndGlyphs">M41</text><text x="333.5" y="17" text-anchor="middle" textLength="31.5" lengthAdjust="spacingAndGlyphs">X037</text><text x="405.5" y="17" text-anchor="middle" textLength="31.5" lengthAdjust="spacingAndGlyphs">X005</text><text x="449" y="38" text-anchor="start" textLength="15.5" lengthAdjust="spacingAndGlyphs">K0</text><text x="117.5" y="79" text-anchor="middle" textLength="23.5" lengthAdjust="spacingAndGlyphs">M40</text><text x="78.5" y="223" text-anchor="end" textLength="15.5" lengthAdjust="spacingAndGlyphs">10</text><text x="117.5" y="203" text-anchor="middle" textLength="31.5" lengthAdjust="spacingAndGlyphs">X036</text><text x="189.5" y="203" text-anchor="middle" textLength="31.5" lengthAdjust="spacingAndGlyphs">M502</text><text x="261.5" y="203" text-anchor="middle" textLength="23.5" lengthAdjust="spacingAndGlyphs">M40</text><text x="333.5" y="203" text-anchor="middle" textLength="31.5" lengthAdjust="spacingAndGlyphs">X037</text><text x="405.5" y="203" text-anchor="middle" textLength="31.5" lengthAdjust="spacingAndGlyphs">X005</text><text x="449" y="224" text-anchor="start" textLength="15.5" lengthAdjust="spacingAndGlyphs">K0</text><text x="117.5" y="265" text-anchor="middle" textLength="23.5" lengthAdjust="spacingAndGlyphs">M41</text><text x="78.5" y="409" text-anchor="end" textLength="15.5" lengthAdjust="spacingAndGlyphs">20</text><text x="117.5" y="389" text-anchor="middle" textLength="31.5" lengthAdjust="spacingAndGlyphs">X037</text><text x="189.5" y="389" text-anchor="middle" textLength="31.5" lengthAdjust="spacingAndGlyphs">M502</text><text x="261.5" y="389" text-anchor="middle" textLength="31.5" lengthAdjust="spacingAndGlyphs">X036</text><text x="333.5" y="389" text-anchor="middle" textLength="31.5" lengthAdjust="spacingAndGlyphs">M159</text><text x="405.5" y="389" text-anchor="middle" textLength="31.5" lengthAdjust="spacingAndGlyphs">X005</text><text x="449" y="410" text-anchor="start" textLength="15.5" lengthAdjust="spacingAndGlyphs">K0</text><text x="117.5" y="451" text-anchor="middle" textLength="23.5" lengthAdjust="spacingAndGlyphs">M42</text><text x="78.5" y="595" text-anchor="end" textLength="15.5" lengthAdjust="spacingAndGlyphs">30</text><text x="117.5" y="575" text-anchor="middle" textLength="31.5" lengthAdjust="spacingAndGlyphs">X037</text><text x="189.5" y="575" text-anchor="middle" textLength="31.5" lengthAdjust="spacingAndGlyphs">M502</text><text x="261.5" y="575" text-anchor="middle" textLength="31.5" lengthAdjust="spacingAndGlyphs">X036</text><text x="333.5" y="575" text-anchor="middle" textLength="23.5" lengthAdjust="spacingAndGlyphs">M42</text><text x="405.5" y="575" text-anchor="middle" textLength="31.5" lengthAdjust="spacingAndGlyphs">X005</text><text x="449" y="596" text-anchor="start" textLength="15.5" lengthAdjust="spacingAndGlyphs">K0</text><text x="89" y="162" text-anchor="start" textLength="15.5" lengthAdjust="spacingAndGlyphs">K0</text><text x="189.5" y="141" text-anchor="middle" textLength="23.5" lengthAdjust="spacingAndGlyphs">M10</text><text x="261.5" y="141" text-anchor="middle" textLength="31.5" lengthAdjust="spacingAndGlyphs">M170</text><text x="333.5" y="141" text-anchor="middle" textLength="31.5" lengthAdjust="spacingAndGlyphs">M171</text><text x="449" y="161" text-anchor="start" textLength="23.5" lengthAdjust="spacingAndGlyphs">M40</text><text x="89" y="348" text-anchor="start" textLength="15.5" lengthAdjust="spacingAndGlyphs">K0</text><text x="189.5" y="327" text-anchor="middle" textLength="23.5" lengthAdjust="spacingAndGlyphs">M10</text><text x="261.5" y="327" text-anchor="middle" textLength="31.5" lengthAdjust="spacingAndGlyphs">M170</text><text x="333.5" y="327" text-anchor="middle" textLength="31.5" lengthAdjust="spacingAndGlyphs">M171</text><text x="449" y="347" text-anchor="start" textLength="23.5" lengthAdjust="spacingAndGlyphs">M41</text><text x="89" y="534" text-anchor="start" textLength="15.5" lengthAdjust="spacingAndGlyphs">K0</text><text x="189.5" y="513" text-anchor="middle" textLength="23.5" lengthAdjust="spacingAndGlyphs">M10</text><text x="261.5" y="513" text-anchor="middle" textLength="31.5" lengthAdjust="spacingAndGlyphs">M170</text><text x="333.5" y="513" text-anchor="middle" textLength="31.5" lengthAdjust="spacingAndGlyphs">M171</text><text x="449" y="533" text-anchor="start" textLength="23.5" lengthAdjust="spacingAndGlyphs">M42</text></g></svg>
<div class="track" style="left:1262px;top:146px;width:16px;height:602px;"></div>
<div class="sbtn" style="left:1262px;top:146px;width:16px;height:16px;"><svg style="position:absolute;left:-1px;top:-1px;" width="16" height="16" viewBox="0 0 16 16"><path d="M3.5 9L7.5 5L11.5 9" stroke="#4D6185" stroke-width="2.4" fill="none"/></svg></div>
<div class="sbtn" style="left:1262px;top:163px;width:16px;height:16px;"><div style="left:4px;top:3px;width:6px;height:1px;background:#EEF4FF;box-shadow:0 1px 0 #8c9fdc;"></div><div style="left:4px;top:5px;width:6px;height:1px;background:#EEF4FF;box-shadow:0 1px 0 #8c9fdc;"></div><div style="left:4px;top:7px;width:6px;height:1px;background:#EEF4FF;box-shadow:0 1px 0 #8c9fdc;"></div><div style="left:4px;top:9px;width:6px;height:1px;background:#EEF4FF;box-shadow:0 1px 0 #8c9fdc;"></div></div>
<div class="sbtn" style="left:1262px;top:732px;width:16px;height:16px;"><svg style="position:absolute;left:-1px;top:-1px;" width="16" height="16" viewBox="0 0 16 16"><path d="M3.5 5L7.5 9L11.5 5" stroke="#4D6185" stroke-width="2.4" fill="none"/></svg></div>
<div style="left:0px;top:749px;width:1280px;height:1px;background:#fff;"></div>
<div class="t" style="left:2px;top:756px;font-size:12px;">准备完毕</div>
<div class="sp" style="left:661px;top:753px;width:85px;height:17px;"></div>
<div class="sp" style="left:749px;top:753px;width:155px;height:17px;"></div>
<div class="sp" style="left:920px;top:753px;width:95px;height:17px;"></div>
<div class="sp" style="left:1019px;top:753px;width:74px;height:17px;"></div>
<div class="sp" style="left:1096px;top:753px;width:55px;height:17px;"></div>
<div class="sp" style="left:1154px;top:753px;width:40px;height:17px;"></div>
<div class="sp" style="left:1198px;top:753px;width:23px;height:17px;"></div>
<div class="sp" style="left:1225px;top:753px;width:22px;height:17px;"></div>
<div class="sp" style="left:1250px;top:753px;width:30px;height:17px;"></div>
<div class="t" style="left:663px;top:756px;font-size:12px;"><span class="l6">FX2N(C)</span></div>
<div class="t" style="left:751px;top:756px;font-size:12px;">本站</div>
<div style="left:0px;top:770px;width:1280px;height:30px;background:linear-gradient(to bottom,#3B7BEA 0%,#2A66E0 8%,#2560DC 20%,#245EDA 50%,#2259D2 85%,#1C49B0 100%);"></div>
<div style="left:0px;top:770px;width:97px;height:30px;background:linear-gradient(to bottom,#5AAE5A 0%,#3F9F3F 12%,#3A963A 50%,#2F8530 88%,#2A702A 100%);border-radius:0 12px 12px 0;box-shadow:2px 0 3px rgba(0,0,40,.5);"></div>
<svg style="position:absolute;left:10px;top:776px;" width="20" height="18" viewBox="0 0 20 18"><path d="M1 3c3-2 5-1 7 0l-1.5 6c-2-1-4-1-7 0z" fill="#E8502A"/><path d="M9.5 3.5c2 1 4 1.500 7 0l-1.500 6c-3 1.500-5 1-7 0z" fill="#7AC043"/><path d="M-.5 10c3-1.500 5-1 7 0l-1.500 6c-2-1-4-1-7 0z" fill="#3A8DEB"/><path d="M7.500 10.500c2 1 4 1.500 7 0l-1.500 6c-3 1.500-5 1-7 0z" fill="#F5C518"/></svg>
<div class="t" style="left:37px;top:775px;font-size:18px;font-weight:300;font-style:italic;color:#fff;text-shadow:1px 1px 1px #1a4a1a;">开始</div>
<svg style="position:absolute;left:109px;top:776px;" width="17" height="17" viewBox="0 0 17 17"><rect x="2" y="3" width="12" height="12" rx="3" fill="#f4f8ff" stroke="#2A50B0" stroke-width="1.5"/><path d="M5 12c3 0 5-2 5-5M5 7h4" stroke="#2A50B0" stroke-width="1.500" fill="none"/><path d="M9 9l6-6l1.500 1.500l-6 6z" fill="#fff" stroke="#3060C0" stroke-width=".8"/></svg>
<svg style="position:absolute;left:130px;top:774px;" width="20" height="21" viewBox="0 0 20 21"><text x="3" y="18" font-family="Liberation Sans,sans-serif" font-size="21" font-weight="bold" fill="#2E9CF0" stroke="#1868C0" stroke-width=".5">e</text><path d="M1 17C1 9 9 2 19 3C12 4 6 9 4 18z" fill="#F0B828"/><path d="M14 2c3-.5 5 0 5 2c-1-1-2.500-1.500-5-1z" fill="#F0B828"/></svg>
<svg style="position:absolute;left:155px;top:777px;" width="16" height="16" viewBox="0 0 16 16"><circle cx="8" cy="8" r="7.5" fill="#2A48B8"/><circle cx="6" cy="5.500" r="3" fill="#5078E0"/><path d="M9 .600A7.500 7.500 0 1 1 .800 10.500C2 13 5.500 13.500 8 12.500C5.500 11.500 4.500 9 6 7C7 6 9 6 10.500 6.500C10.500 4 10 2 9 .600z" fill="#E8701A"/><path d="M1 11c2 3.500 6 5 10 3.500c2-1 3.500-3 4-5c-1.500 2.500-4 4-7 3.500c-3 0-5-1-7-2z" fill="#F6B030"/></svg>
<div style="left:191px;top:773px;width:157px;height:25px;background:linear-gradient(to bottom,#5A93F5 0%,#3F7DEE 12%,#3A76E8 60%,#356EDF 100%);border-radius:3px;box-shadow:inset 1px 1px 0 rgba(255,255,255,.25), inset -1px -1px 0 rgba(0,0,80,.25);"><svg style="position:absolute;left:9px;top:4px;" width="16" height="16" viewBox="0 0 16 16"><circle cx="8" cy="8" r="7.5" fill="#2A48B8"/><circle cx="6" cy="5.500" r="3" fill="#5078E0"/><path d="M9 .600A7.500 7.500 0 1 1 .800 10.500C2 13 5.500 13.500 8 12.500C5.500 11.500 4.500 9 6 7C7 6 9 6 10.500 6.500C10.500 4 10 2 9 .600z" fill="#E8701A"/><path d="M1 11c2 3.500 6 5 10 3.500c2-1 3.500-3 4-5c-1.500 2.500-4 4-7 3.500c-3 0-5-1-7-2z" fill="#F6B030"/></svg><div class="tb" style="left:28px;top:6px;">功能页面<span class="l6"> - </span>工控<span class="l6">...</span></div></div>
<div style="left:350px;top:773px;width:157px;height:25px;background:linear-gradient(to bottom,#5A93F5 0%,#3F7DEE 12%,#3A76E8 60%,#356EDF 100%);border-radius:3px;box-shadow:inset 1px 1px 0 rgba(255,255,255,.25), inset -1px -1px 0 rgba(0,0,80,.25);"><svg style="position:absolute;left:9px;top:6px;" width="18" height="12" viewBox="0 0 18 12"><path d="M1 6l4-4h10l2 4v3h-16z" fill="#d8d8d8" stroke="#666"/><rect x="1" y="6" width="16" height="3.5" fill="#aaa" stroke="#666"/><circle cx="14" cy="7.8" r="1" fill="#3c3"/></svg><div class="tb" style="left:28px;top:6px;"><span class="l6">E:\</span></div></div>
<div style="left:510px;top:773px;width:159px;height:25px;background:linear-gradient(to bottom,#1B4FBE 0%,#1F55C8 40%,#1E52C2 100%);border-radius:3px;box-shadow:inset 1px 1px 2px rgba(0,0,60,.6);"><svg style="position:absolute;left:8px;top:3px;" width="18" height="18" viewBox="0 0 18 18"><polygon points="9,0 17,4 17,13 9,18 1,13 1,4" fill="#1a1010"/><polygon points="2,5 8,2 8,12 2,12" fill="#c01818"/><rect x="9" y="8" width="7" height="7" fill="#d8d8d8"/><rect x="11" y="9" width="3" height="3" fill="#302020"/></svg><div class="tb" style="left:28px;top:6px;"><span class="l6">MELSOFT</span>系列<span class="l6"> GX D...</span></div></div>
<div style="left:670px;top:773px;width:159px;height:25px;background:linear-gradient(to bottom,#5A93F5 0%,#3F7DEE 12%,#3A76E8 60%,#356EDF 100%);border-radius:3px;box-shadow:inset 1px 1px 0 rgba(255,255,255,.25), inset -1px -1px 0 rgba(0,0,80,.25);"><svg style="position:absolute;left:10px;top:3px;" width="14" height="18" viewBox="0 0 14 18"><path d="M2 8h10l-1 9h-8z" fill="#C8A040" stroke="#604000"/><path d="M4 8l-1-7M7 8v-8M10 8l2-6" stroke="#D03030" stroke-width="1.6"/><path d="M5.5 8l0-5" stroke="#3050D0" stroke-width="1.6"/><path d="M8.500 8l1-6" stroke="#30A030" stroke-width="1.6"/></svg><div class="tb" style="left:28px;top:6px;"><span class="l6">001.JPG - </span>画图</div></div>
<svg style="position:absolute;left:1150px;top:776px;" width="18" height="16" viewBox="0 0 18 16"><path d="M3 1h12" stroke="#222" stroke-dasharray="1 1"/><rect x="0.5" y="4.5" width="16" height="9" rx="1" fill="#e8e8e8" stroke="#222"/><path d="M2 7h13M2 9h13M3 11.500h11" stroke="#333" stroke-dasharray="1.5 1"/></svg>
<div style="left:1185px;top:770px;width:95px;height:30px;background:linear-gradient(to bottom,#1AA0F0 0%,#1196EC 10%,#0F8FE8 50%,#0E86DC 88%,#0A6CC0 100%);border-left:1px solid #0A3E9E;box-shadow:inset 1px 0 0 #4FC0FA;"></div>
<svg style="position:absolute;left:1176px;top:775px;" width="20" height="20" viewBox="0 0 20 20"><circle cx="10" cy="10" r="9" fill="#3C8EF0" stroke="#BFE0FF" stroke-width="1"/><path d="M12 5.500L7.500 10L12 14.500" stroke="#fff" stroke-width="2.2" fill="none"/></svg>
<svg style="position:absolute;left:1196px;top:777px;" width="16" height="17" viewBox="0 0 16 17"><rect x="1" y="1" width="12" height="13" rx="5" fill="#f4fff4" stroke="#d0f0e0"/><text x="2.500" y="12" font-family="Liberation Sans,sans-serif" font-size="13" font-weight="bold" fill="#108050">e</text><rect x="12" y="9" width="1.600" height="6" fill="#e8fff0"/></svg>
<svg style="position:absolute;left:1214px;top:775px;" width="20" height="18" viewBox="0 0 20 18"><rect x="1" y="4" width="10" height="8" fill="#2a3a7a" stroke="#dde"/><rect x="3" y="13" width="7" height="2" fill="#ccd"/><path d="M13 3c2 2 2 5 0 7M15.500 1.500c3 3 3 7 0 10" stroke="#e8f0ff" fill="none"/></svg>
<div class="t" style="left:1237px;top:779px;font-size:12px;color:#fff;letter-spacing:0.3px;">20:23</div>
</body></html>
